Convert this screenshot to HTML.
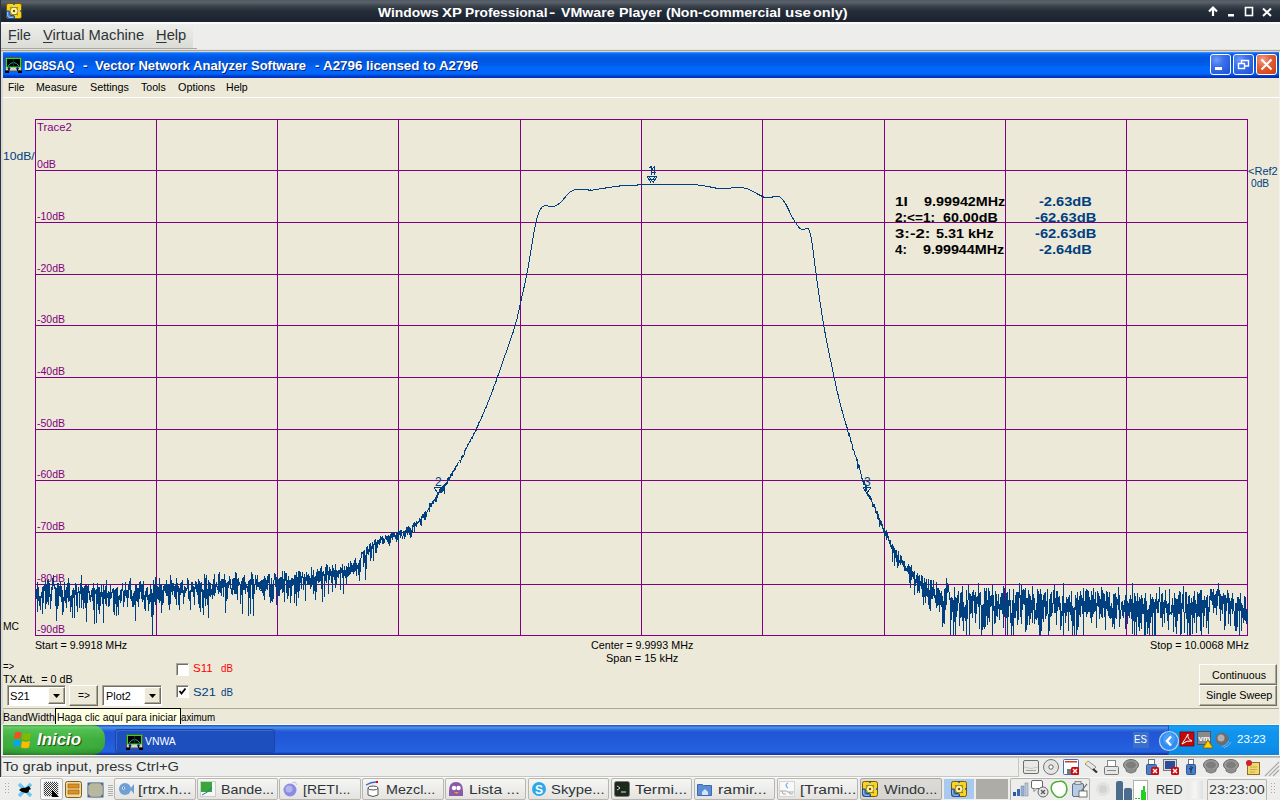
<!DOCTYPE html>
<html><head><meta charset="utf-8">
<style>
*{margin:0;padding:0;box-sizing:border-box}
html,body{width:1280px;height:800px;overflow:hidden;background:#ECE9D8;font-family:"Liberation Sans",sans-serif;position:relative}
.a{position:absolute}
.t{position:absolute;white-space:nowrap;line-height:1;transform-origin:0 0}
.t u{text-decoration:underline;text-underline-offset:2px}
.btn{position:absolute;background:#ECE9D8;border-top:1px solid #fff;border-left:1px solid #fff;border-right:1px solid #716f64;border-bottom:1px solid #716f64;box-shadow:inset -1px -1px 0 #aca899}
.sunk{position:absolute;background:#fff;border-top:1px solid #aca899;border-left:1px solid #aca899;border-right:1px solid #fff;border-bottom:1px solid #fff;box-shadow:inset 1px 1px 0 #716f64}
.pb{position:absolute;top:778px;height:22px;border:1px solid #b8b6b0;border-radius:2px;background:linear-gradient(#f6f6f5,#e4e3e0)}
.ic{position:absolute}
</style></head><body>
<!-- ========== VMware title bar ========== -->
<div class="a" style="left:0;top:0;width:1280px;height:22px;background:linear-gradient(#50575f 0,#5c636c 2px,#3a424c 6px,#252d39 11px,#1b2330 22px)"></div>
<svg class="ic" style="left:6px;top:3px" width="16" height="16" viewBox="0 0 16 16">
 <rect x="0.5" y="0.5" width="15" height="15" rx="1.8" fill="#f8d41e" stroke="#7a5c00" stroke-width="1"/>
 <path d="M0.5 8H2.8Q3.8 8 3.8 9V11.5Q3.8 12.5 4.8 12.5H7.5Q8.5 12.5 8.5 13.5V15.5H4Q0.5 15.5 0.5 12Z" fill="#4a86d0" stroke="#1c4a98" stroke-width="1"/>
 <path d="M1.5 9v3q0 2.5 2.5 2.5h3" fill="none" stroke="#a8c8f0" stroke-width=".8"/>
 <path d="M4 4.5l3 2M12 4.5l-3 2M4 12l3-2M12 12l-3-2" stroke="#7a5c00" stroke-width="1"/>
 <path d="M5.5 4.5h5l1.5 3.5-1.5 3.5h-5L4 8z" fill="#fff39a" stroke="#8a6a00" stroke-width=".8"/>
 <circle cx="8" cy="8" r="1.2" fill="#6a5000"/>
 <rect x="7.3" y="0" width="1.4" height="2" fill="#1c4a98"/><rect x="14" y="7.3" width="2" height="1.4" fill="#1c4a98"/>
 <rect x="7" y="3.2" width="2" height="1" fill="#a8d0f8"/><rect x="11.8" y="7" width="1" height="2" fill="#a8d0f8"/>
</svg>
<svg class="ic" style="left:1200px;top:4px" width="80" height="14" viewBox="0 0 80 14">
 <path d="M13 12V4M9 7.5l4-4 4 4" fill="none" stroke="#fff" stroke-width="2.2"/>
 <rect x="28" y="10" width="6" height="2.5" fill="#fff"/>
 <rect x="45.5" y="3.5" width="7" height="8" fill="none" stroke="#fff" stroke-width="1.6"/>
 <path d="M63 4.5l8 7.5M71 4.5l-8 7.5" stroke="#fff" stroke-width="2"/>
</svg>

<!-- ========== VMware menu bar ========== -->
<div class="a" style="left:0;top:22px;width:1280px;height:27px;background:#EDEDEB"></div>
<div class="a" style="left:0;top:22px;width:1280px;height:2px;background:#fafaf8"></div><div class="a" style="left:1px;top:24px;width:192px;height:24px;background:linear-gradient(#ededeb,#dcdcd6)"></div><div class="a" style="left:0;top:48px;width:197px;height:1px;background:#a9a99f"></div>
<div class="a" style="left:0;top:49px;width:1280px;height:1px;background:#e4e4e0"></div>
<div class="a" style="left:0;top:50px;width:1280px;height:1px;background:#a8a69c"></div>
<div class="a" style="left:0;top:51px;width:1280px;height:1px;background:#d8d4c8"></div>

<!-- ========== XP window ========== -->
<div class="a" style="left:1px;top:52px;width:2px;height:673px;background:#d9d8d4"></div>
<div class="a" style="left:3px;top:52px;width:1276px;height:26px;background:linear-gradient(#3a8cff 0,#3a8cff 1px,#0a70ff 1px,#0a70ff 2px,#0062f0 2px,#0062f0 4px,#0056e0 5px,#0056e0 9px,#005ce8 11px,#005ce8 13px,#0066fc 15px,#0066fc 22px,#0050e0 23px,#0040d0 24px,#0030c0 25px,#0030c0 26px)"></div>
<div class="a" style="left:3px;top:52px;width:1276px;height:26px;background:linear-gradient(90deg,rgba(0,0,0,0) 0,rgba(0,0,0,0) 95%,rgba(0,20,90,.15) 100%)"></div>
<svg class="ic" style="left:5px;top:57px" width="17" height="16" viewBox="0 0 17 16">
 <rect x="0.5" y="0.5" width="16" height="13.5" rx="1" fill="#d8d2c6" stroke="#5a5448" stroke-width="1"/>
 <rect x="1.5" y="1.5" width="14" height="8.5" fill="#000" stroke="#22dd22" stroke-width="1"/>
 <path d="M3 9Q8.5 2 14 9" fill="none" stroke="#1aa0a8" stroke-width="1"/>
 <rect x="8" y="2" width="1" height="7" fill="#0a3a10"/>
 <circle cx="4" cy="11.5" r="1.3" fill="#001880"/><circle cx="12.5" cy="11.5" r="1.3" fill="#001880"/>
 <rect x="0" y="13.5" width="4" height="2.5" fill="#000"/><rect x="13" y="13.5" width="4" height="2.5" fill="#000"/>
 <rect x="3.5" y="12" width="1" height="2" fill="#000"/><rect x="12" y="12" width="1" height="2" fill="#000"/>
</svg>
<!-- XP title buttons -->
<div class="a" style="left:1210px;top:54px;width:21px;height:21px;border:1px solid #fff;border-radius:3px;background:radial-gradient(circle at 30% 25%,#6e9df8 0,#3c70ee 35%,#2a5fe0 70%,#1d4fd0 100%)"></div>
<div class="a" style="left:1215px;top:67px;width:7px;height:3px;background:#fff"></div>
<div class="a" style="left:1233px;top:54px;width:21px;height:21px;border:1px solid #fff;border-radius:3px;background:radial-gradient(circle at 30% 25%,#6e9df8 0,#3c70ee 35%,#2a5fe0 70%,#1d4fd0 100%)"></div>
<svg class="ic" style="left:1233px;top:54px" width="21" height="21" viewBox="0 0 21 21">
 <rect x="5.5" y="9.5" width="6" height="5" fill="none" stroke="#fff" stroke-width="1.4"/>
 <path d="M8.5 9V6.5h7v5.5h-3.5" fill="none" stroke="#fff" stroke-width="1.4"/>
</svg>
<div class="a" style="left:1256px;top:54px;width:21px;height:21px;border:1px solid #fff;border-radius:3px;background:radial-gradient(circle at 30% 25%,#f0a088 0,#e2603a 40%,#d84a1c 75%,#c43a10 100%)"></div>
<svg class="ic" style="left:1256px;top:54px" width="21" height="21" viewBox="0 0 21 21">
 <path d="M5.5 5.5l10 10M15.5 5.5l-10 10" stroke="#fff" stroke-width="2"/>
</svg>
<div class="a" style="left:1279px;top:52px;width:1px;height:703px;background:#f2f2f0"></div>

<!-- app menu -->
<div class="a" style="left:3px;top:97px;width:1276px;height:1px;background:#fff"></div>

<!-- ========== chart ========== -->
<svg class="a" style="left:0;top:0" width="1280" height="800" shape-rendering="crispEdges">
<g fill="#800080"><rect x="35" y="119" width="1" height="517"/><rect x="156" y="119" width="1" height="517"/><rect x="277" y="119" width="1" height="517"/><rect x="398" y="119" width="1" height="517"/><rect x="520" y="119" width="1" height="517"/><rect x="641" y="119" width="1" height="517"/><rect x="762" y="119" width="1" height="517"/><rect x="884" y="119" width="1" height="517"/><rect x="1005" y="119" width="1" height="517"/><rect x="1126" y="119" width="1" height="517"/><rect x="1247" y="119" width="1" height="517"/><rect x="35" y="119" width="1213" height="1"/><rect x="35" y="170" width="1213" height="1"/><rect x="35" y="222" width="1213" height="1"/><rect x="35" y="274" width="1213" height="1"/><rect x="35" y="325" width="1213" height="1"/><rect x="35" y="377" width="1213" height="1"/><rect x="35" y="429" width="1213" height="1"/><rect x="35" y="480" width="1213" height="1"/><rect x="35" y="532" width="1213" height="1"/><rect x="35" y="584" width="1213" height="1"/><rect x="35" y="635" width="1213" height="1"/></g>
<path d="M35.5 595.5 L35.8 592.4 L36.2 589.0 L36.5 599.3 L36.8 596.4 L37.2 582.2 L37.5 594.7 L37.8 612.1 L38.2 592.5 L38.5 586.6 L38.8 591.0 L39.2 600.0 L39.5 597.9 L39.8 600.8 L40.2 610.2 L40.5 596.6 L40.8 598.0 L41.2 593.8 L41.5 591.7 L41.8 598.4 L42.2 586.7 L42.5 599.1 L42.8 613.8 L43.2 593.8 L43.5 586.1 L43.8 593.7 L44.2 584.6 L44.5 583.7 L44.8 590.5 L45.2 578.6 L45.5 598.9 L45.8 609.2 L46.2 599.9 L46.5 592.9 L46.8 585.0 L47.2 602.4 L47.5 593.6 L47.8 580.7 L48.2 579.5 L48.5 604.9 L48.8 599.5 L49.2 582.9 L49.5 594.7 L49.8 596.8 L50.2 593.8 L50.5 599.0 L50.8 608.8 L51.2 593.6 L51.5 588.4 L51.8 587.0 L52.2 589.6 L52.5 581.3 L52.8 577.9 L53.2 586.2 L53.5 574.9 L53.8 582.5 L54.2 586.4 L54.5 588.7 L54.8 584.5 L55.2 590.0 L55.5 589.5 L55.8 589.3 L56.2 620.8 L56.5 590.1 L56.8 588.1 L57.2 590.2 L57.5 609.2 L57.8 583.5 L58.2 605.8 L58.5 602.2 L58.8 583.2 L59.2 588.3 L59.5 590.5 L59.8 595.2 L60.2 597.1 L60.5 585.1 L60.8 582.4 L61.2 598.2 L61.5 591.0 L61.8 585.6 L62.2 614.9 L62.5 613.0 L62.8 589.8 L63.2 603.3 L63.5 609.5 L63.8 612.0 L64.2 591.4 L64.5 581.8 L64.8 597.7 L65.2 593.7 L65.5 602.6 L65.8 592.4 L66.2 587.3 L66.5 607.9 L66.8 594.7 L67.2 582.7 L67.5 588.0 L67.8 593.7 L68.2 602.1 L68.5 589.4 L68.8 577.8 L69.2 587.7 L69.5 585.8 L69.8 595.7 L70.2 605.5 L70.5 612.4 L70.8 596.3 L71.2 605.0 L71.5 599.9 L71.8 595.5 L72.2 617.7 L72.5 589.8 L72.8 594.8 L73.2 597.9 L73.5 587.9 L73.8 593.2 L74.2 593.8 L74.5 617.8 L74.8 590.2 L75.2 593.3 L75.5 594.7 L75.8 583.5 L76.2 591.3 L76.5 584.0 L76.8 605.6 L77.2 604.7 L77.5 611.8 L77.8 596.7 L78.2 587.5 L78.5 592.2 L78.8 591.6 L79.2 594.5 L79.5 608.3 L79.8 591.6 L80.2 591.7 L80.5 585.7 L80.8 593.9 L81.2 574.6 L81.5 608.3 L81.8 604.5 L82.2 593.8 L82.5 586.7 L82.8 594.1 L83.2 604.0 L83.5 588.2 L83.8 608.7 L84.2 592.3 L84.5 603.1 L84.8 586.2 L85.2 607.5 L85.5 585.1 L85.8 592.8 L86.2 621.5 L86.5 585.3 L86.8 594.8 L87.2 602.8 L87.5 590.2 L87.8 585.6 L88.2 593.2 L88.5 587.6 L88.8 584.7 L89.2 596.8 L89.5 591.6 L89.8 596.7 L90.2 601.8 L90.5 597.5 L90.8 595.4 L91.2 597.2 L91.5 590.4 L91.8 590.8 L92.2 589.1 L92.5 589.0 L92.8 593.7 L93.2 607.8 L93.5 582.9 L93.8 592.5 L94.2 623.6 L94.5 588.0 L94.8 596.6 L95.2 592.1 L95.5 594.4 L95.8 590.3 L96.2 595.8 L96.5 588.6 L96.8 622.5 L97.2 587.7 L97.5 591.5 L97.8 583.2 L98.2 590.2 L98.5 599.4 L98.8 609.9 L99.2 587.5 L99.5 599.3 L99.8 613.5 L100.2 592.2 L100.5 600.5 L100.8 605.8 L101.2 584.2 L101.5 589.2 L101.8 591.9 L102.2 600.4 L102.5 592.4 L102.8 603.9 L103.2 585.5 L103.5 622.9 L103.8 606.9 L104.2 591.9 L104.5 590.2 L104.8 598.2 L105.2 585.7 L105.5 603.8 L105.8 601.1 L106.2 606.2 L106.5 580.0 L106.8 594.8 L107.2 598.0 L107.5 593.6 L107.8 594.4 L108.2 600.4 L108.5 591.0 L108.8 607.2 L109.2 605.7 L109.5 593.5 L109.8 593.3 L110.2 590.4 L110.5 598.8 L110.8 585.2 L111.2 597.6 L111.5 596.2 L111.8 593.0 L112.2 591.9 L112.5 589.2 L112.8 592.6 L113.2 592.7 L113.5 612.4 L113.8 587.6 L114.2 615.2 L114.5 591.6 L114.8 591.5 L115.2 588.6 L115.5 601.4 L115.8 590.9 L116.2 615.7 L116.5 597.5 L116.8 589.6 L117.2 587.1 L117.5 590.4 L117.8 596.8 L118.2 614.5 L118.5 606.2 L118.8 595.6 L119.2 599.6 L119.5 597.4 L119.8 595.5 L120.2 595.1 L120.5 602.9 L120.8 589.8 L121.2 600.7 L121.5 590.6 L121.8 594.7 L122.2 584.8 L122.5 583.2 L122.8 584.6 L123.2 596.9 L123.5 607.0 L123.8 600.3 L124.2 592.1 L124.5 590.1 L124.8 602.3 L125.2 591.5 L125.5 582.3 L125.8 586.7 L126.2 593.1 L126.5 598.0 L126.8 591.9 L127.2 590.4 L127.5 599.4 L127.8 607.1 L128.2 590.5 L128.5 585.4 L128.8 593.5 L129.2 588.0 L129.5 590.1 L129.8 580.7 L130.2 587.7 L130.5 599.2 L130.8 578.2 L131.2 600.7 L131.5 594.6 L131.8 596.3 L132.2 596.4 L132.5 596.7 L132.8 606.0 L133.2 607.1 L133.5 598.7 L133.8 595.2 L134.2 591.3 L134.5 604.8 L134.8 595.8 L135.2 589.8 L135.5 585.2 L135.8 620.6 L136.2 585.4 L136.5 590.9 L136.8 598.4 L137.2 595.0 L137.5 602.1 L137.8 588.0 L138.2 595.2 L138.5 588.2 L138.8 607.2 L139.2 582.3 L139.5 598.7 L139.8 588.8 L140.2 584.4 L140.5 580.7 L140.8 584.1 L141.2 598.5 L141.5 585.3 L141.8 585.1 L142.2 583.8 L142.5 600.6 L142.8 601.1 L143.2 581.4 L143.5 593.5 L143.8 590.7 L144.2 608.9 L144.5 594.7 L144.8 597.7 L145.2 596.4 L145.5 610.7 L145.8 590.6 L146.2 594.0 L146.5 588.4 L146.8 596.2 L147.2 597.0 L147.5 592.8 L147.8 587.2 L148.2 610.5 L148.5 594.9 L148.8 600.6 L149.2 597.9 L149.5 593.9 L149.8 603.6 L150.2 600.0 L150.5 584.6 L150.8 586.5 L151.2 591.1 L151.5 591.5 L151.8 595.5 L152.2 635.0 L152.5 613.2 L152.8 592.9 L153.2 614.5 L153.5 603.9 L153.8 580.5 L154.2 602.2 L154.5 600.9 L154.8 594.5 L155.2 576.9 L155.5 587.9 L155.8 604.5 L156.2 584.4 L156.5 603.2 L156.8 582.3 L157.2 596.6 L157.5 599.4 L157.8 585.6 L158.2 588.9 L158.5 597.3 L158.8 599.5 L159.2 578.0 L159.5 603.2 L159.8 597.1 L160.2 584.3 L160.5 598.1 L160.8 588.0 L161.2 613.0 L161.5 585.4 L161.8 600.0 L162.2 592.9 L162.5 590.5 L162.8 604.6 L163.2 601.6 L163.5 597.4 L163.8 586.6 L164.2 586.3 L164.5 589.8 L164.8 590.1 L165.2 583.8 L165.5 590.6 L165.8 593.0 L166.2 579.7 L166.5 590.4 L166.8 595.4 L167.2 595.4 L167.5 596.0 L167.8 583.9 L168.2 592.0 L168.5 584.0 L168.8 599.6 L169.2 610.0 L169.5 600.9 L169.8 585.1 L170.2 603.7 L170.5 595.0 L170.8 575.1 L171.2 585.1 L171.5 591.8 L171.8 579.9 L172.2 586.4 L172.5 592.5 L172.8 594.5 L173.2 588.0 L173.5 584.3 L173.8 583.2 L174.2 590.9 L174.5 596.8 L174.8 588.7 L175.2 584.4 L175.5 598.2 L175.8 591.1 L176.2 604.9 L176.5 578.1 L176.8 592.6 L177.2 591.1 L177.5 583.2 L177.8 590.6 L178.2 585.8 L178.5 605.2 L178.8 594.3 L179.2 609.6 L179.5 588.3 L179.8 593.6 L180.2 583.8 L180.5 583.1 L180.8 594.9 L181.2 591.8 L181.5 585.4 L181.8 581.7 L182.2 589.1 L182.5 584.9 L182.8 580.0 L183.2 604.2 L183.5 592.1 L183.8 589.8 L184.2 590.9 L184.5 586.2 L184.8 596.7 L185.2 587.4 L185.5 588.9 L185.8 592.5 L186.2 589.1 L186.5 589.5 L186.8 589.5 L187.2 587.6 L187.5 585.1 L187.8 577.7 L188.2 582.1 L188.5 586.8 L188.8 598.8 L189.2 591.5 L189.5 594.5 L189.8 591.6 L190.2 609.8 L190.5 594.9 L190.8 597.7 L191.2 584.3 L191.5 581.8 L191.8 592.2 L192.2 582.5 L192.5 584.5 L192.8 592.0 L193.2 585.7 L193.5 597.1 L193.8 594.3 L194.2 594.4 L194.5 604.6 L194.8 586.7 L195.2 587.7 L195.5 581.4 L195.8 587.0 L196.2 589.9 L196.5 591.5 L196.8 581.8 L197.2 590.2 L197.5 584.2 L197.8 592.1 L198.2 598.3 L198.5 579.2 L198.8 604.3 L199.2 591.8 L199.5 581.2 L199.8 608.2 L200.2 583.4 L200.5 611.8 L200.8 596.9 L201.2 581.6 L201.5 584.3 L201.8 591.6 L202.2 589.1 L202.5 602.5 L202.8 599.1 L203.2 614.8 L203.5 598.8 L203.8 589.9 L204.2 597.7 L204.5 594.1 L204.8 574.1 L205.2 581.5 L205.5 606.3 L205.8 588.9 L206.2 589.5 L206.5 574.8 L206.8 598.0 L207.2 599.5 L207.5 591.0 L207.8 589.0 L208.2 618.4 L208.5 582.7 L208.8 580.2 L209.2 583.0 L209.5 591.0 L209.8 594.5 L210.2 596.7 L210.5 591.2 L210.8 582.8 L211.2 593.6 L211.5 591.8 L211.8 595.4 L212.2 586.5 L212.5 598.7 L212.8 585.2 L213.2 592.3 L213.5 594.5 L213.8 583.3 L214.2 574.2 L214.5 588.9 L214.8 595.7 L215.2 590.6 L215.5 588.3 L215.8 589.1 L216.2 581.8 L216.5 584.7 L216.8 584.9 L217.2 588.2 L217.5 589.1 L217.8 585.8 L218.2 593.6 L218.5 585.8 L218.8 573.8 L219.2 591.6 L219.5 572.3 L219.8 573.5 L220.2 593.0 L220.5 581.1 L220.8 587.3 L221.2 583.4 L221.5 578.9 L221.8 595.5 L222.2 581.4 L222.5 587.4 L222.8 579.2 L223.2 579.1 L223.5 596.5 L223.8 591.0 L224.2 583.6 L224.5 579.8 L224.8 574.2 L225.2 584.4 L225.5 585.9 L225.8 612.6 L226.2 589.6 L226.5 582.7 L226.8 595.5 L227.2 598.9 L227.5 594.7 L227.8 582.4 L228.2 588.2 L228.5 583.3 L228.8 585.6 L229.2 576.4 L229.5 585.4 L229.8 578.5 L230.2 579.1 L230.5 589.2 L230.8 584.4 L231.2 591.9 L231.5 590.0 L231.8 593.3 L232.2 595.1 L232.5 590.9 L232.8 579.3 L233.2 579.0 L233.5 586.3 L233.8 589.9 L234.2 578.1 L234.5 588.6 L234.8 593.7 L235.2 574.8 L235.5 593.5 L235.8 571.6 L236.2 585.1 L236.5 572.8 L236.8 586.5 L237.2 599.8 L237.5 580.0 L237.8 579.6 L238.2 579.2 L238.5 578.3 L238.8 584.8 L239.2 584.1 L239.5 584.0 L239.8 582.5 L240.2 587.7 L240.5 590.1 L240.8 603.9 L241.2 584.6 L241.5 595.2 L241.8 583.5 L242.2 578.2 L242.5 614.0 L242.8 581.3 L243.2 584.9 L243.5 590.3 L243.8 577.5 L244.2 590.3 L244.5 575.1 L244.8 580.4 L245.2 583.7 L245.5 593.7 L245.8 591.4 L246.2 585.5 L246.5 586.9 L246.8 584.1 L247.2 587.1 L247.5 591.1 L247.8 591.4 L248.2 581.1 L248.5 616.2 L248.8 580.9 L249.2 589.8 L249.5 588.4 L249.8 580.4 L250.2 613.7 L250.5 586.3 L250.8 589.0 L251.2 571.8 L251.5 585.0 L251.8 580.6 L252.2 579.8 L252.5 573.6 L252.8 579.1 L253.2 615.9 L253.5 579.0 L253.8 599.2 L254.2 585.7 L254.5 585.9 L254.8 593.7 L255.2 578.1 L255.5 585.1 L255.8 574.6 L256.2 589.7 L256.5 578.6 L256.8 581.8 L257.2 587.2 L257.5 574.6 L257.8 579.7 L258.2 584.1 L258.5 587.4 L258.8 582.7 L259.2 582.8 L259.5 583.0 L259.8 588.0 L260.2 591.4 L260.5 589.5 L260.8 581.2 L261.2 580.5 L261.5 581.8 L261.8 590.5 L262.2 588.8 L262.5 579.6 L262.8 592.8 L263.2 578.6 L263.5 596.3 L263.8 583.1 L264.2 600.3 L264.5 575.6 L264.8 579.2 L265.2 577.8 L265.5 590.2 L265.8 590.3 L266.2 585.8 L266.5 589.1 L266.8 583.5 L267.2 577.6 L267.5 589.8 L267.8 576.6 L268.2 575.9 L268.5 579.4 L268.8 580.9 L269.2 584.0 L269.5 596.7 L269.8 574.1 L270.2 594.8 L270.5 594.7 L270.8 603.4 L271.2 598.3 L271.5 579.3 L271.8 577.6 L272.2 591.1 L272.5 586.0 L272.8 601.6 L273.2 597.5 L273.5 583.0 L273.8 588.4 L274.2 572.7 L274.5 576.0 L274.8 576.1 L275.2 580.5 L275.5 586.6 L275.8 574.2 L276.2 579.1 L276.5 604.5 L276.8 578.2 L277.2 578.6 L277.5 589.9 L277.8 586.7 L278.2 578.9 L278.5 583.2 L278.8 595.5 L279.2 578.0 L279.5 595.9 L279.8 588.0 L280.2 581.7 L280.5 576.7 L280.8 589.9 L281.2 580.2 L281.5 576.8 L281.8 589.4 L282.2 579.1 L282.5 571.1 L282.8 593.0 L283.2 578.7 L283.5 581.1 L283.8 578.6 L284.2 601.8 L284.5 593.1 L284.8 571.4 L285.2 574.8 L285.5 581.0 L285.8 579.9 L286.2 579.3 L286.5 593.2 L286.8 573.5 L287.2 599.0 L287.5 583.8 L287.8 580.9 L288.2 580.9 L288.5 595.6 L288.8 576.1 L289.2 585.7 L289.5 587.5 L289.8 581.5 L290.2 582.1 L290.5 603.0 L290.8 582.2 L291.2 577.8 L291.5 595.6 L291.8 578.5 L292.2 585.2 L292.5 586.4 L292.8 578.2 L293.2 584.1 L293.5 578.8 L293.8 584.0 L294.2 574.8 L294.5 589.0 L294.8 602.6 L295.2 587.2 L295.5 585.8 L295.8 578.2 L296.2 572.3 L296.5 583.9 L296.8 606.0 L297.2 581.2 L297.5 576.7 L297.8 584.6 L298.2 598.3 L298.5 575.2 L298.8 571.5 L299.2 571.4 L299.5 591.4 L299.8 583.0 L300.2 580.4 L300.5 572.4 L300.8 576.0 L301.2 588.8 L301.5 585.8 L301.8 579.8 L302.2 572.4 L302.5 578.3 L302.8 572.1 L303.2 583.2 L303.5 576.9 L303.8 590.2 L304.2 579.9 L304.5 573.9 L304.8 580.4 L305.2 584.2 L305.5 601.4 L305.8 576.6 L306.2 581.3 L306.5 578.4 L306.8 572.2 L307.2 584.6 L307.5 575.1 L307.8 584.4 L308.2 574.1 L308.5 580.4 L308.8 583.6 L309.2 582.7 L309.5 584.4 L309.8 576.5 L310.2 588.5 L310.5 588.6 L310.8 586.5 L311.2 571.1 L311.5 566.6 L311.8 586.5 L312.2 583.6 L312.5 575.2 L312.8 582.3 L313.2 580.0 L313.5 570.5 L313.8 593.9 L314.2 588.9 L314.5 580.4 L314.8 577.5 L315.2 577.2 L315.5 588.4 L315.8 600.3 L316.2 585.2 L316.5 571.9 L316.8 578.5 L317.2 581.1 L317.5 569.6 L317.8 570.4 L318.2 572.1 L318.5 578.5 L318.8 582.5 L319.2 573.3 L319.5 581.7 L319.8 571.2 L320.2 576.9 L320.5 581.1 L320.8 568.2 L321.2 575.0 L321.5 565.7 L321.8 574.1 L322.2 602.1 L322.5 583.1 L322.8 571.7 L323.2 575.8 L323.5 570.6 L323.8 572.2 L324.2 575.1 L324.5 575.0 L324.8 597.3 L325.2 567.4 L325.5 571.4 L325.8 573.8 L326.2 577.0 L326.5 583.1 L326.8 563.9 L327.2 566.6 L327.5 572.3 L327.8 572.2 L328.2 578.3 L328.5 593.5 L328.8 575.1 L329.2 566.9 L329.5 580.4 L329.8 570.7 L330.2 574.6 L330.5 568.6 L330.8 571.3 L331.2 580.4 L331.5 570.6 L331.8 572.9 L332.2 591.9 L332.5 565.1 L332.8 568.5 L333.2 571.1 L333.5 577.3 L333.8 567.8 L334.2 576.0 L334.5 570.3 L334.8 570.3 L335.2 588.1 L335.5 563.8 L335.8 584.3 L336.2 585.2 L336.5 570.2 L336.8 574.6 L337.2 575.4 L337.5 576.8 L337.8 571.5 L338.2 577.2 L338.5 576.7 L338.8 570.1 L339.2 573.2 L339.5 573.0 L339.8 573.0 L340.2 567.2 L340.5 590.3 L340.8 571.7 L341.2 567.7 L341.5 571.3 L341.8 572.7 L342.2 563.8 L342.5 578.1 L342.8 575.9 L343.2 572.5 L343.5 594.3 L343.8 574.5 L344.2 565.7 L344.5 568.9 L344.8 576.3 L345.2 570.1 L345.5 570.9 L345.8 570.6 L346.2 584.1 L346.5 568.2 L346.8 565.6 L347.2 576.6 L347.5 569.3 L347.8 567.2 L348.2 575.5 L348.5 562.9 L348.8 575.4 L349.2 569.0 L349.5 573.0 L349.8 574.7 L350.2 561.3 L350.5 573.5 L350.8 571.2 L351.2 572.2 L351.5 562.9 L351.8 569.7 L352.2 564.7 L352.5 566.9 L352.8 569.0 L353.2 573.9 L353.5 565.9 L353.8 562.8 L354.2 571.8 L354.5 560.5 L354.8 560.6 L355.2 561.5 L355.5 557.8 L355.8 570.5 L356.2 568.6 L356.5 576.2 L356.8 563.5 L357.2 566.3 L357.5 568.4 L357.8 568.1 L358.2 565.6 L358.5 563.0 L358.8 569.2 L359.2 580.5 L359.5 559.7 L359.8 567.3 L360.2 558.0 L360.5 572.0 L360.8 562.7 L361.2 553.8 L361.5 557.8 L361.8 551.8 L362.2 553.5 L362.5 553.2 L362.8 553.3 L363.2 551.5 L363.5 559.3 L363.8 566.9 L364.2 559.5 L364.5 556.7 L364.8 549.8 L365.2 559.3 L365.5 555.3 L365.8 579.6 L366.2 560.0 L366.5 561.1 L366.8 548.7 L367.2 545.9 L367.5 553.9 L367.8 550.9 L368.2 553.5 L368.5 549.1 L368.8 555.0 L369.2 548.6 L369.5 544.2 L369.8 549.4 L370.2 543.5 L370.5 554.4 L370.8 561.3 L371.2 555.8 L371.5 545.7 L371.8 553.2 L372.2 544.5 L372.5 543.4 L372.8 541.9 L373.2 546.7 L373.5 560.6 L373.8 545.3 L374.2 544.9 L374.5 542.3 L374.8 541.0 L375.2 540.3 L375.5 546.1 L375.8 553.2 L376.2 552.2 L376.5 544.7 L376.8 543.4 L377.2 539.9 L377.5 545.3 L377.8 548.3 L378.2 540.2 L378.5 542.9 L378.8 544.3 L379.2 539.5 L379.5 545.3 L379.8 539.1 L380.2 542.7 L380.5 537.3 L380.8 536.4 L381.2 539.5 L381.5 537.0 L381.8 540.4 L382.2 536.4 L382.5 539.6 L382.8 544.4 L383.2 540.7 L383.5 538.1 L383.8 543.8 L384.2 539.4 L384.5 543.4 L384.8 539.6 L385.2 537.9 L385.5 534.6 L385.8 537.7 L386.2 538.7 L386.5 540.0 L386.8 536.1 L387.2 537.3 L387.5 536.3 L387.8 540.1 L388.2 539.3 L388.5 543.9 L388.8 535.5 L389.2 537.4 L389.5 537.7 L389.8 546.1 L390.2 536.0 L390.5 543.2 L390.8 534.5 L391.2 538.3 L391.5 534.4 L391.8 532.1 L392.2 533.9 L392.5 534.9 L392.8 539.6 L393.2 534.5 L393.5 533.3 L393.8 532.7 L394.2 535.1 L394.5 533.2 L394.8 534.4 L395.2 539.4 L395.5 536.8 L395.8 535.2 L396.2 541.7 L396.5 532.6 L396.8 532.6 L397.2 536.7 L397.5 533.3 L397.8 537.6 L398.2 542.5 L398.5 537.6 L398.8 529.3 L399.2 535.4 L399.5 532.0 L399.8 531.4 L400.2 538.3 L400.5 530.2 L400.8 534.8 L401.2 531.8 L401.5 530.0 L401.8 533.7 L402.2 537.6 L402.5 536.7 L402.8 539.4 L403.2 532.7 L403.5 532.1 L403.8 533.2 L404.2 531.4 L404.5 536.1 L404.8 539.0 L405.2 535.9 L405.5 532.0 L405.8 530.7 L406.2 531.5 L406.5 526.8 L406.8 528.7 L407.2 533.1 L407.5 533.6 L407.8 528.4 L408.2 526.2 L408.5 531.2 L408.8 527.7 L409.2 534.9 L409.5 527.2 L409.8 535.3 L410.2 528.4 L410.5 537.8 L410.8 527.9 L411.2 534.5 L411.5 529.7 L411.8 536.6 L412.2 526.8 L412.5 531.7 L412.8 525.5 L413.2 526.5 L413.5 523.1 L413.8 526.4 L414.2 523.8 L414.5 532.0 L414.8 522.4 L415.2 525.5 L415.5 523.2 L415.8 523.2 L416.2 527.0 L416.5 526.6 L416.8 521.4 L417.2 522.4 L417.5 523.5 L417.8 523.4 L418.2 521.0 L418.5 523.2 L418.8 521.1 L419.2 522.3 L419.5 519.1 L419.8 519.6 L420.2 519.9 L420.5 521.9 L420.8 524.7 L421.2 518.4 L421.5 526.0 L421.8 516.4 L422.2 514.9 L422.5 518.2 L422.8 515.6 L423.2 516.1 L423.5 514.4 L423.8 518.0 L424.2 513.4 L424.5 513.0 L424.8 520.2 L425.2 519.4 L425.5 511.0 L425.8 513.3 L426.2 511.9 L426.5 516.5 L426.8 512.1 L427.2 511.4 L427.5 510.8 L427.8 511.9 L428.2 508.8 L428.5 508.2 L428.8 508.2 L429.2 508.8 L429.5 511.7 L429.8 505.0 L430.2 505.8 L430.5 503.1 L430.8 506.3 L431.2 504.9 L431.5 506.8 L431.8 504.1 L432.2 502.5 L432.5 503.9 L432.8 501.3 L433.2 503.2 L433.5 504.0 L433.8 500.5 L434.2 499.3 L434.5 499.7 L434.8 501.0 L435.2 498.6 L435.5 501.6 L435.8 498.8 L436.2 496.1 L436.5 495.7 L436.8 501.7 L437.2 494.7 L437.5 494.7 L437.8 492.6 L438.2 494.9 L438.5 493.3 L438.8 494.5 L439.2 492.2 L439.5 490.2 L439.8 490.6 L440.2 492.2 L440.5 493.0 L440.8 488.8 L441.2 488.3 L441.5 489.6 L441.8 492.7 L442.2 491.2 L442.5 487.5 L442.8 486.8 L443.2 488.3 L443.5 485.3 L443.8 487.9 L444.2 494.2 L444.5 488.4 L444.8 485.2 L445.2 485.4 L445.5 485.3 L445.8 484.0 L446.2 482.0 L446.5 484.8 L446.8 485.0 L447.2 482.6 L447.5 480.2 L447.8 478.9 L448.2 480.0 L448.5 478.1 L448.8 477.8 L449.2 480.6 L449.5 477.5 L449.8 479.4 L450.2 476.0 L450.5 475.2 L450.8 476.0 L451.2 475.0 L451.5 473.2 L451.8 474.2 L452.2 472.7 L452.5 475.5 L452.8 471.3 L453.2 470.1 L453.5 470.8 L453.8 472.4 L454.2 469.9 L454.5 469.2 L454.8 469.0 L455.2 467.6 L455.5 468.3 L455.8 466.5 L456.2 465.3 L456.5 465.5 L456.8 466.8 L457.2 465.2 L457.5 463.9 L457.8 463.5 L458.2 462.9 L458.5 462.4 L458.8 462.7 L459.2 461.6 L459.5 461.5 L459.8 460.7 L460.2 461.8 L460.5 460.6 L460.8 461.0 L461.2 459.3 L461.5 457.2 L461.8 457.7 L462.2 456.0 L462.5 456.6 L462.8 455.0 L463.2 456.5 L463.5 454.7 L463.8 456.1 L464.2 453.8 L464.5 451.9 L464.8 450.8 L465.2 450.5 L465.5 449.7 L465.8 448.7 L466.2 448.0 L466.5 448.6 L466.8 448.5 L467.2 446.4 L467.5 446.1 L467.8 445.1 L468.2 443.7 L468.5 444.2 L468.8 443.8 L469.2 442.4 L469.5 442.4 L469.8 441.3 L470.2 441.2 L470.5 440.5 L470.8 440.4 L471.2 438.4 L471.5 438.2 L471.8 437.6 L472.2 438.4 L472.5 437.8 L472.8 436.4 L473.2 435.4 L473.5 434.5 L473.8 433.8 L474.2 433.1 L474.5 433.2 L474.8 432.7 L475.2 430.8 L475.5 430.7 L475.8 431.2 L476.2 430.7 L476.5 428.9 L476.8 427.9 L477.2 427.2 L477.5 426.9 L477.8 426.0 L478.2 425.1 L478.5 424.9 L478.8 422.8 L479.2 422.4 L479.5 422.2 L479.8 421.4 L480.2 420.0 L480.5 419.7 L480.8 419.9 L481.2 417.6 L481.5 417.1 L481.8 416.7 L482.2 416.7 L482.5 415.3 L482.8 414.7 L483.2 413.3 L483.5 412.3 L483.8 412.0 L484.2 411.8 L484.5 410.2 L484.8 409.9 L485.2 408.9 L485.5 407.8 L485.8 408.4 L486.2 406.8 L486.5 405.6 L486.8 406.0 L487.2 404.3 L487.5 403.7 L487.8 402.7 L488.2 401.9 L488.5 401.2 L488.8 400.4 L489.2 400.0 L489.5 398.5 L489.8 397.7 L490.2 396.8 L490.5 396.1 L490.8 395.2 L491.2 395.0 L491.5 393.6 L491.8 392.6 L492.2 391.2 L492.5 390.6 L492.8 389.6 L493.2 389.2 L493.5 388.0 L493.8 386.7 L494.2 386.0 L494.5 385.2 L494.8 384.3 L495.2 383.4 L495.5 382.4 L495.8 381.6 L496.2 381.6 L496.5 379.9 L496.8 379.1 L497.2 377.7 L497.5 377.1 L497.8 376.1 L498.2 375.1 L498.5 374.4 L498.8 373.3 L499.2 372.0 L499.5 371.8 L499.8 370.2 L500.2 369.1 L500.5 368.4 L500.8 367.8 L501.2 366.4 L501.5 365.5 L501.8 364.6 L502.2 363.3 L502.5 362.6 L502.8 362.0 L503.2 360.6 L503.5 360.0 L503.8 358.8 L504.2 357.8 L504.5 356.8 L504.8 355.9 L505.2 354.9 L505.5 354.2 L505.8 353.2 L506.2 352.5 L506.5 351.4 L506.8 350.3 L507.2 349.0 L507.5 348.3 L507.8 347.3 L508.2 346.3 L508.5 345.3 L508.8 344.5 L509.2 343.4 L509.5 342.5 L509.8 341.7 L510.2 340.7 L510.5 339.6 L510.8 338.9 L511.2 337.6 L511.5 336.8 L511.8 336.0 L512.2 334.8 L512.5 334.3 L512.8 333.0 L513.2 331.9 L513.5 330.9 L513.8 329.9 L514.2 328.9 L514.5 327.9 L514.8 326.9 L515.2 325.4 L515.5 324.3 L515.8 323.2 L516.2 321.6 L516.5 320.7 L516.8 319.4 L517.2 317.8 L517.5 316.4 L517.8 315.0 L518.2 313.2 L518.5 312.1 L518.8 310.6 L519.2 308.9 L519.5 307.6 L519.8 306.2 L520.2 304.5 L520.5 303.2 L520.8 301.8 L521.2 300.1 L521.5 298.7 L521.8 297.4 L522.2 295.5 L522.5 294.2 L522.8 292.9 L523.2 291.2 L523.5 289.6 L523.8 288.4 L524.2 286.6 L524.5 285.2 L524.8 283.9 L525.2 282.1 L525.5 280.6 L525.8 279.3 L526.2 277.2 L526.5 275.7 L526.8 274.2 L527.2 272.1 L527.5 270.4 L527.8 268.8 L528.2 266.6 L528.5 264.7 L528.8 263.0 L529.2 260.7 L529.5 258.9 L529.8 257.0 L530.2 254.6 L530.5 252.8 L530.8 251.0 L531.2 248.6 L531.5 246.7 L531.8 244.9 L532.2 242.4 L532.5 240.7 L532.8 238.9 L533.2 236.5 L533.5 234.7 L533.8 233.0 L534.2 230.8 L534.5 229.2 L534.8 227.6 L535.2 225.6 L535.5 224.2 L535.8 222.9 L536.2 221.2 L536.5 220.0 L536.8 218.9 L537.2 217.6 L537.5 216.5 L537.8 215.6 L538.2 214.4 L538.5 213.5 L538.8 212.8 L539.2 211.8 L539.5 211.1 L539.8 210.5 L540.2 209.7 L540.5 209.2 L540.8 208.7 L541.2 208.1 L541.5 207.7 L541.8 207.4 L542.2 207.0 L542.5 206.7 L542.8 206.5 L543.2 206.3 L543.5 206.1 L543.8 206.1 L544.2 205.9 L544.5 205.8 L544.8 205.8 L545.2 205.7 L545.5 205.7 L545.8 205.7 L546.2 205.7 L546.5 205.7 L546.8 205.7 L547.2 205.8 L547.5 205.8 L547.8 205.8 L548.2 206.0 L548.5 206.0 L548.8 206.1 L549.2 206.2 L549.5 206.3 L549.8 206.4 L550.2 206.5 L550.5 206.6 L550.8 206.7 L551.2 206.7 L551.5 206.8 L551.8 206.8 L552.2 206.8 L552.5 206.8 L552.8 206.8 L553.2 206.7 L553.5 206.6 L553.8 206.5 L554.2 206.4 L554.5 206.2 L554.8 206.1 L555.2 205.9 L555.5 205.7 L555.8 205.6 L556.2 205.4 L556.5 205.2 L556.8 205.0 L557.2 204.8 L557.5 204.6 L557.8 204.5 L558.2 204.2 L558.5 204.0 L558.8 203.9 L559.2 203.6 L559.5 203.4 L559.8 203.1 L560.2 202.8 L560.5 202.5 L560.8 202.3 L561.2 201.9 L561.5 201.6 L561.8 201.2 L562.2 200.8 L562.5 200.4 L562.8 200.1 L563.2 199.6 L563.5 199.2 L563.8 198.9 L564.2 198.4 L564.5 198.0 L564.8 197.6 L565.2 197.1 L565.5 196.8 L565.8 196.4 L566.2 195.9 L566.5 195.5 L566.8 195.2 L567.2 194.7 L567.5 194.4 L567.8 194.1 L568.2 193.7 L568.5 193.4 L568.8 193.2 L569.2 192.8 L569.5 192.6 L569.8 192.4 L570.2 192.1 L570.5 191.9 L570.8 191.7 L571.2 191.5 L571.5 191.3 L571.8 191.1 L572.2 190.9 L572.5 190.7 L572.8 190.6 L573.2 190.3 L573.5 190.2 L573.8 190.0 L574.2 189.9 L574.5 189.7 L574.8 189.6 L575.2 189.5 L575.5 189.4 L575.8 189.3 L576.2 189.2 L576.5 189.2 L576.8 189.2 L577.2 189.2 L577.5 189.2 L577.8 189.2 L578.2 189.2 L578.5 189.2 L578.8 189.2 L579.2 189.2 L579.5 189.3 L579.8 189.3 L580.2 189.3 L580.5 189.3 L580.8 189.3 L581.2 189.3 L581.5 189.4 L581.8 189.4 L582.2 189.4 L582.5 189.4 L582.8 189.5 L583.2 189.5 L583.5 189.5 L583.8 189.5 L584.2 189.6 L584.5 189.6 L584.8 189.6 L585.2 189.7 L585.5 189.7 L585.8 189.7 L586.2 189.8 L586.5 189.7 L586.8 189.8 L587.2 189.8 L587.5 189.9 L587.8 189.9 L588.2 189.9 L588.5 190.0 L588.8 190.0 L589.2 190.0 L589.5 190.0 L589.8 190.0 L590.2 190.1 L590.5 190.0 L590.8 190.1 L591.2 190.1 L591.5 190.0 L591.8 190.0 L592.2 190.0 L592.5 190.0 L592.8 190.0 L593.2 189.9 L593.5 189.9 L593.8 189.8 L594.2 189.8 L594.5 189.7 L594.8 189.7 L595.2 189.6 L595.5 189.6 L595.8 189.5 L596.2 189.5 L596.5 189.4 L596.8 189.4 L597.2 189.3 L597.5 189.3 L597.8 189.2 L598.2 189.1 L598.5 189.1 L598.8 189.0 L599.2 189.0 L599.5 188.9 L599.8 188.9 L600.2 188.9 L600.5 188.8 L600.8 188.7 L601.2 188.7 L601.5 188.6 L601.8 188.6 L602.2 188.5 L602.5 188.5 L602.8 188.4 L603.2 188.4 L603.5 188.3 L603.8 188.3 L604.2 188.2 L604.5 188.2 L604.8 188.1 L605.2 188.0 L605.5 188.0 L605.8 187.9 L606.2 187.9 L606.5 187.9 L606.8 187.8 L607.2 187.7 L607.5 187.7 L607.8 187.6 L608.2 187.6 L608.5 187.5 L608.8 187.5 L609.2 187.4 L609.5 187.4 L609.8 187.4 L610.2 187.3 L610.5 187.2 L610.8 187.2 L611.2 187.1 L611.5 187.1 L611.8 187.0 L612.2 187.0 L612.5 186.9 L612.8 186.9 L613.2 186.8 L613.5 186.8 L613.8 186.7 L614.2 186.7 L614.5 186.6 L614.8 186.6 L615.2 186.5 L615.5 186.5 L615.8 186.4 L616.2 186.4 L616.5 186.3 L616.8 186.3 L617.2 186.2 L617.5 186.2 L617.8 186.1 L618.2 186.1 L618.5 186.1 L618.8 186.0 L619.2 186.0 L619.5 186.0 L619.8 185.9 L620.2 185.9 L620.5 185.9 L620.8 185.9 L621.2 185.9 L621.5 185.8 L621.8 185.8 L622.2 185.8 L622.5 185.8 L622.8 185.8 L623.2 185.7 L623.5 185.7 L623.8 185.7 L624.2 185.7 L624.5 185.7 L624.8 185.6 L625.2 185.6 L625.5 185.6 L625.8 185.6 L626.2 185.5 L626.5 185.5 L626.8 185.5 L627.2 185.5 L627.5 185.5 L627.8 185.5 L628.2 185.4 L628.5 185.4 L628.8 185.4 L629.2 185.4 L629.5 185.4 L629.8 185.3 L630.2 185.3 L630.5 185.3 L630.8 185.3 L631.2 185.3 L631.5 185.2 L631.8 185.2 L632.2 185.2 L632.5 185.2 L632.8 185.2 L633.2 185.1 L633.5 185.1 L633.8 185.1 L634.2 185.1 L634.5 185.1 L634.8 185.1 L635.2 185.0 L635.5 185.0 L635.8 185.0 L636.2 185.0 L636.5 185.0 L636.8 185.0 L637.2 185.0 L637.5 185.0 L637.8 184.9 L638.2 184.9 L638.5 184.9 L638.8 184.9 L639.2 184.9 L639.5 184.9 L639.8 184.9 L640.2 184.8 L640.5 184.8 L640.8 184.8 L641.2 184.8 L641.5 184.8 L641.8 184.8 L642.2 184.8 L642.5 184.8 L642.8 184.8 L643.2 184.7 L643.5 184.7 L643.8 184.7 L644.2 184.7 L644.5 184.7 L644.8 184.7 L645.2 184.7 L645.5 184.7 L645.8 184.7 L646.2 184.6 L646.5 184.6 L646.8 184.6 L647.2 184.6 L647.5 184.6 L647.8 184.6 L648.2 184.6 L648.5 184.6 L648.8 184.6 L649.2 184.5 L649.5 184.5 L649.8 184.5 L650.2 184.5 L650.5 184.5 L650.8 184.5 L651.2 184.5 L651.5 184.5 L651.8 184.5 L652.2 184.4 L652.5 184.4 L652.8 184.4 L653.2 184.4 L653.5 184.5 L653.8 184.4 L654.2 184.4 L654.5 184.4 L654.8 184.4 L655.2 184.4 L655.5 184.4 L655.8 184.4 L656.2 184.4 L656.5 184.5 L656.8 184.4 L657.2 184.4 L657.5 184.4 L657.8 184.4 L658.2 184.4 L658.5 184.4 L658.8 184.4 L659.2 184.4 L659.5 184.4 L659.8 184.4 L660.2 184.5 L660.5 184.5 L660.8 184.5 L661.2 184.5 L661.5 184.5 L661.8 184.5 L662.2 184.5 L662.5 184.5 L662.8 184.5 L663.2 184.5 L663.5 184.5 L663.8 184.5 L664.2 184.5 L664.5 184.5 L664.8 184.5 L665.2 184.5 L665.5 184.5 L665.8 184.5 L666.2 184.5 L666.5 184.5 L666.8 184.5 L667.2 184.5 L667.5 184.5 L667.8 184.5 L668.2 184.5 L668.5 184.5 L668.8 184.5 L669.2 184.5 L669.5 184.5 L669.8 184.5 L670.2 184.5 L670.5 184.5 L670.8 184.5 L671.2 184.5 L671.5 184.5 L671.8 184.5 L672.2 184.5 L672.5 184.5 L672.8 184.5 L673.2 184.6 L673.5 184.5 L673.8 184.5 L674.2 184.6 L674.5 184.6 L674.8 184.6 L675.2 184.6 L675.5 184.6 L675.8 184.6 L676.2 184.6 L676.5 184.6 L676.8 184.6 L677.2 184.6 L677.5 184.6 L677.8 184.6 L678.2 184.6 L678.5 184.6 L678.8 184.6 L679.2 184.6 L679.5 184.6 L679.8 184.6 L680.2 184.6 L680.5 184.6 L680.8 184.6 L681.2 184.6 L681.5 184.6 L681.8 184.6 L682.2 184.6 L682.5 184.7 L682.8 184.6 L683.2 184.7 L683.5 184.7 L683.8 184.7 L684.2 184.7 L684.5 184.7 L684.8 184.7 L685.2 184.7 L685.5 184.7 L685.8 184.7 L686.2 184.7 L686.5 184.7 L686.8 184.7 L687.2 184.7 L687.5 184.8 L687.8 184.7 L688.2 184.8 L688.5 184.8 L688.8 184.8 L689.2 184.8 L689.5 184.8 L689.8 184.8 L690.2 184.8 L690.5 184.8 L690.8 184.8 L691.2 184.8 L691.5 184.8 L691.8 184.8 L692.2 184.8 L692.5 184.8 L692.8 184.8 L693.2 184.9 L693.5 184.9 L693.8 184.9 L694.2 184.9 L694.5 184.9 L694.8 184.9 L695.2 184.9 L695.5 184.9 L695.8 184.9 L696.2 184.9 L696.5 184.9 L696.8 184.9 L697.2 184.9 L697.5 184.9 L697.8 185.0 L698.2 185.0 L698.5 185.0 L698.8 185.0 L699.2 185.0 L699.5 185.0 L699.8 185.0 L700.2 185.1 L700.5 185.1 L700.8 185.2 L701.2 185.2 L701.5 185.3 L701.8 185.3 L702.2 185.4 L702.5 185.4 L702.8 185.5 L703.2 185.5 L703.5 185.6 L703.8 185.7 L704.2 185.7 L704.5 185.8 L704.8 185.9 L705.2 186.0 L705.5 186.0 L705.8 186.1 L706.2 186.1 L706.5 186.2 L706.8 186.3 L707.2 186.3 L707.5 186.4 L707.8 186.5 L708.2 186.5 L708.5 186.6 L708.8 186.7 L709.2 186.7 L709.5 186.8 L709.8 186.9 L710.2 186.9 L710.5 187.0 L710.8 187.1 L711.2 187.1 L711.5 187.2 L711.8 187.2 L712.2 187.4 L712.5 187.4 L712.8 187.4 L713.2 187.5 L713.5 187.6 L713.8 187.6 L714.2 187.7 L714.5 187.8 L714.8 187.9 L715.2 187.9 L715.5 188.0 L715.8 188.1 L716.2 188.1 L716.5 188.2 L716.8 188.3 L717.2 188.3 L717.5 188.4 L717.8 188.5 L718.2 188.5 L718.5 188.6 L718.8 188.6 L719.2 188.7 L719.5 188.7 L719.8 188.8 L720.2 188.8 L720.5 188.8 L720.8 188.8 L721.2 188.8 L721.5 188.8 L721.8 188.8 L722.2 188.8 L722.5 188.8 L722.8 188.7 L723.2 188.7 L723.5 188.7 L723.8 188.6 L724.2 188.6 L724.5 188.6 L724.8 188.6 L725.2 188.5 L725.5 188.5 L725.8 188.5 L726.2 188.4 L726.5 188.4 L726.8 188.4 L727.2 188.3 L727.5 188.3 L727.8 188.3 L728.2 188.3 L728.5 188.2 L728.8 188.2 L729.2 188.1 L729.5 188.1 L729.8 188.1 L730.2 188.0 L730.5 188.0 L730.8 188.0 L731.2 187.9 L731.5 187.9 L731.8 187.8 L732.2 187.8 L732.5 187.8 L732.8 187.7 L733.2 187.7 L733.5 187.7 L733.8 187.6 L734.2 187.6 L734.5 187.6 L734.8 187.5 L735.2 187.5 L735.5 187.4 L735.8 187.4 L736.2 187.4 L736.5 187.3 L736.8 187.3 L737.2 187.3 L737.5 187.2 L737.8 187.2 L738.2 187.2 L738.5 187.2 L738.8 187.2 L739.2 187.2 L739.5 187.2 L739.8 187.2 L740.2 187.3 L740.5 187.3 L740.8 187.3 L741.2 187.4 L741.5 187.5 L741.8 187.5 L742.2 187.6 L742.5 187.7 L742.8 187.7 L743.2 187.8 L743.5 187.9 L743.8 188.0 L744.2 188.0 L744.5 188.1 L744.8 188.2 L745.2 188.3 L745.5 188.3 L745.8 188.4 L746.2 188.5 L746.5 188.6 L746.8 188.6 L747.2 188.8 L747.5 188.9 L747.8 189.0 L748.2 189.1 L748.5 189.2 L748.8 189.3 L749.2 189.5 L749.5 189.6 L749.8 189.8 L750.2 190.0 L750.5 190.1 L750.8 190.3 L751.2 190.5 L751.5 190.7 L751.8 190.9 L752.2 191.0 L752.5 191.2 L752.8 191.4 L753.2 191.6 L753.5 191.8 L753.8 192.0 L754.2 192.2 L754.5 192.3 L754.8 192.5 L755.2 192.7 L755.5 192.9 L755.8 193.0 L756.2 193.3 L756.5 193.4 L756.8 193.6 L757.2 193.8 L757.5 194.0 L757.8 194.1 L758.2 194.4 L758.5 194.5 L758.8 194.7 L759.2 194.9 L759.5 195.0 L759.8 195.2 L760.2 195.4 L760.5 195.5 L760.8 195.7 L761.2 195.9 L761.5 196.1 L761.8 196.2 L762.2 196.4 L762.5 196.5 L762.8 196.7 L763.2 196.9 L763.5 197.0 L763.8 197.1 L764.2 197.3 L764.5 197.4 L764.8 197.5 L765.2 197.6 L765.5 197.6 L765.8 197.7 L766.2 197.7 L766.5 197.7 L766.8 197.7 L767.2 197.7 L767.5 197.6 L767.8 197.7 L768.2 197.6 L768.5 197.5 L768.8 197.5 L769.2 197.5 L769.5 197.4 L769.8 197.4 L770.2 197.3 L770.5 197.3 L770.8 197.2 L771.2 197.2 L771.5 197.1 L771.8 197.1 L772.2 197.0 L772.5 197.0 L772.8 196.9 L773.2 196.9 L773.5 196.9 L773.8 196.8 L774.2 196.7 L774.5 196.7 L774.8 196.7 L775.2 196.6 L775.5 196.6 L775.8 196.5 L776.2 196.5 L776.5 196.4 L776.8 196.4 L777.2 196.4 L777.5 196.4 L777.8 196.4 L778.2 196.4 L778.5 196.5 L778.8 196.6 L779.2 196.7 L779.5 196.8 L779.8 197.0 L780.2 197.3 L780.5 197.5 L780.8 197.7 L781.2 198.1 L781.5 198.4 L781.8 198.8 L782.2 199.2 L782.5 199.6 L782.8 199.9 L783.2 200.4 L783.5 200.7 L783.8 201.2 L784.2 201.7 L784.5 202.1 L784.8 202.5 L785.2 203.1 L785.5 203.6 L785.8 204.1 L786.2 204.8 L786.5 205.4 L786.8 206.0 L787.2 206.8 L787.5 207.4 L787.8 208.0 L788.2 208.8 L788.5 209.4 L788.8 210.1 L789.2 210.9 L789.5 211.6 L789.8 212.2 L790.2 213.1 L790.5 213.7 L790.8 214.3 L791.2 215.1 L791.5 215.7 L791.8 216.3 L792.2 217.1 L792.5 217.6 L792.8 218.1 L793.2 218.8 L793.5 219.3 L793.8 219.8 L794.2 220.4 L794.5 221.0 L794.8 221.4 L795.2 222.1 L795.5 222.5 L795.8 222.9 L796.2 223.5 L796.5 224.0 L796.8 224.4 L797.2 225.0 L797.5 225.5 L797.8 225.9 L798.2 226.5 L798.5 226.8 L798.8 227.3 L799.2 227.7 L799.5 228.0 L799.8 228.4 L800.2 228.7 L800.5 228.9 L800.8 229.1 L801.2 229.2 L801.5 229.4 L801.8 229.4 L802.2 229.5 L802.5 229.5 L802.8 229.5 L803.2 229.5 L803.5 229.4 L803.8 229.3 L804.2 229.2 L804.5 229.1 L804.8 229.0 L805.2 228.9 L805.5 228.8 L805.8 228.7 L806.2 228.6 L806.5 228.5 L806.8 228.5 L807.2 228.4 L807.5 228.5 L807.8 228.6 L808.2 228.8 L808.5 229.2 L808.8 229.6 L809.2 230.4 L809.5 231.2 L809.8 232.1 L810.2 233.5 L810.5 234.8 L810.8 236.3 L811.2 238.4 L811.5 240.2 L811.8 241.9 L812.2 244.6 L812.5 246.5 L812.8 248.7 L813.2 251.6 L813.5 253.9 L813.8 256.2 L814.2 259.3 L814.5 261.6 L814.8 264.0 L815.2 267.1 L815.5 269.5 L815.8 271.7 L816.2 274.8 L816.5 277.0 L816.8 279.4 L817.2 282.1 L817.5 284.2 L817.8 286.3 L818.2 289.2 L818.5 291.1 L818.8 293.3 L819.2 296.1 L819.5 298.0 L819.8 300.1 L820.2 302.8 L820.5 304.9 L820.8 306.8 L821.2 309.6 L821.5 311.6 L821.8 313.5 L822.2 316.0 L822.5 318.0 L822.8 319.9 L823.2 322.4 L823.5 324.3 L823.8 325.8 L824.2 328.5 L824.5 329.8 L824.8 331.5 L825.2 333.4 L825.5 335.4 L825.8 336.5 L826.2 338.6 L826.5 340.1 L826.8 341.6 L827.2 343.7 L827.5 345.3 L827.8 347.0 L828.2 348.8 L828.5 350.1 L828.8 351.8 L829.2 353.6 L829.5 354.9 L829.8 356.7 L830.2 358.4 L830.5 360.1 L830.8 361.3 L831.2 363.3 L831.5 364.5 L831.8 366.2 L832.2 368.1 L832.5 369.6 L832.8 371.0 L833.2 372.8 L833.5 374.1 L833.8 375.4 L834.2 377.6 L834.5 379.0 L834.8 380.0 L835.2 382.1 L835.5 383.4 L835.8 384.7 L836.2 387.1 L836.5 387.8 L836.8 390.2 L837.2 391.5 L837.5 392.7 L837.8 393.8 L838.2 395.2 L838.5 396.9 L838.8 398.2 L839.2 399.8 L839.5 401.3 L839.8 401.8 L840.2 404.0 L840.5 405.1 L840.8 405.5 L841.2 407.6 L841.5 408.5 L841.8 409.5 L842.2 411.3 L842.5 412.8 L842.8 413.3 L843.2 415.2 L843.5 415.7 L843.8 417.1 L844.2 418.1 L844.5 419.5 L844.8 420.9 L845.2 421.3 L845.5 424.6 L845.8 423.8 L846.2 424.8 L846.5 427.6 L846.8 426.8 L847.2 427.7 L847.5 432.0 L847.8 430.9 L848.2 432.6 L848.5 433.6 L848.8 435.5 L849.2 434.2 L849.5 435.6 L849.8 436.3 L850.2 437.6 L850.5 438.2 L850.8 440.8 L851.2 442.3 L851.5 442.2 L851.8 443.2 L852.2 444.4 L852.5 445.9 L852.8 449.1 L853.2 449.3 L853.5 450.0 L853.8 449.6 L854.2 452.9 L854.5 451.3 L854.8 453.3 L855.2 456.0 L855.5 454.8 L855.8 456.8 L856.2 457.9 L856.5 458.0 L856.8 460.3 L857.2 460.0 L857.5 463.0 L857.8 468.8 L858.2 465.7 L858.5 464.1 L858.8 466.6 L859.2 466.0 L859.5 468.2 L859.8 468.8 L860.2 472.0 L860.5 470.3 L860.8 472.1 L861.2 475.5 L861.5 473.8 L861.8 475.5 L862.2 481.1 L862.5 479.4 L862.8 478.6 L863.2 484.8 L863.5 484.6 L863.8 481.5 L864.2 480.9 L864.5 483.4 L864.8 482.8 L865.2 486.9 L865.5 486.8 L865.8 492.1 L866.2 486.9 L866.5 487.5 L866.8 490.1 L867.2 492.1 L867.5 491.6 L867.8 493.3 L868.2 497.2 L868.5 495.6 L868.8 494.1 L869.2 498.2 L869.5 497.7 L869.8 495.4 L870.2 497.3 L870.5 498.2 L870.8 498.6 L871.2 500.3 L871.5 498.2 L871.8 500.8 L872.2 502.5 L872.5 506.6 L872.8 503.3 L873.2 504.1 L873.5 506.3 L873.8 505.7 L874.2 503.6 L874.5 507.5 L874.8 507.0 L875.2 507.2 L875.5 513.3 L875.8 509.0 L876.2 512.7 L876.5 513.0 L876.8 511.5 L877.2 511.4 L877.5 519.4 L877.8 514.6 L878.2 513.6 L878.5 519.9 L878.8 517.1 L879.2 518.1 L879.5 527.2 L879.8 518.2 L880.2 521.6 L880.5 521.7 L880.8 524.9 L881.2 520.7 L881.5 525.5 L881.8 525.5 L882.2 523.7 L882.5 527.2 L882.8 525.7 L883.2 531.5 L883.5 530.4 L883.8 528.7 L884.2 528.8 L884.5 527.6 L884.8 537.0 L885.2 535.4 L885.5 533.6 L885.8 531.6 L886.2 530.9 L886.5 531.6 L886.8 539.5 L887.2 533.4 L887.5 535.6 L887.8 537.2 L888.2 536.1 L888.5 540.4 L888.8 537.4 L889.2 544.3 L889.5 540.9 L889.8 540.4 L890.2 545.9 L890.5 539.7 L890.8 543.9 L891.2 549.1 L891.5 545.2 L891.8 548.3 L892.2 543.9 L892.5 544.9 L892.8 561.7 L893.2 545.7 L893.5 548.3 L893.8 549.0 L894.2 554.0 L894.5 548.3 L894.8 566.3 L895.2 550.9 L895.5 556.3 L895.8 550.6 L896.2 550.7 L896.5 561.8 L896.8 558.9 L897.2 559.3 L897.5 567.6 L897.8 560.3 L898.2 551.4 L898.5 553.1 L898.8 565.9 L899.2 561.0 L899.5 561.7 L899.8 560.0 L900.2 565.2 L900.5 564.2 L900.8 554.8 L901.2 557.3 L901.5 562.2 L901.8 561.2 L902.2 564.5 L902.5 560.6 L902.8 560.6 L903.2 566.7 L903.5 561.8 L903.8 561.4 L904.2 562.2 L904.5 562.0 L904.8 570.8 L905.2 566.3 L905.5 567.2 L905.8 569.9 L906.2 571.0 L906.5 568.8 L906.8 569.7 L907.2 566.4 L907.5 571.7 L907.8 568.1 L908.2 565.0 L908.5 573.6 L908.8 563.7 L909.2 572.1 L909.5 582.5 L909.8 565.7 L910.2 568.7 L910.5 587.6 L910.8 586.2 L911.2 564.9 L911.5 572.3 L911.8 580.4 L912.2 572.6 L912.5 571.0 L912.8 574.2 L913.2 578.6 L913.5 576.9 L913.8 573.1 L914.2 571.6 L914.5 572.7 L914.8 594.8 L915.2 578.6 L915.5 580.1 L915.8 579.8 L916.2 582.2 L916.5 574.6 L916.8 582.9 L917.2 573.8 L917.5 573.4 L917.8 593.1 L918.2 583.4 L918.5 576.0 L918.8 590.7 L919.2 574.6 L919.5 593.1 L919.8 584.9 L920.2 585.5 L920.5 585.0 L920.8 581.6 L921.2 581.2 L921.5 588.7 L921.8 575.6 L922.2 576.0 L922.5 596.6 L922.8 588.7 L923.2 604.5 L923.5 594.3 L923.8 582.9 L924.2 596.5 L924.5 577.6 L924.8 585.2 L925.2 582.2 L925.5 596.1 L925.8 602.7 L926.2 579.2 L926.5 593.0 L926.8 595.7 L927.2 590.1 L927.5 588.7 L927.8 587.9 L928.2 604.7 L928.5 603.8 L928.8 579.1 L929.2 598.5 L929.5 598.8 L929.8 607.7 L930.2 610.6 L930.5 588.4 L930.8 579.7 L931.2 581.1 L931.5 598.2 L931.8 598.8 L932.2 587.4 L932.5 599.4 L932.8 588.5 L933.2 596.1 L933.5 586.2 L933.8 580.4 L934.2 596.4 L934.5 592.3 L934.8 594.3 L935.2 600.9 L935.5 595.3 L935.8 597.4 L936.2 607.7 L936.5 600.0 L936.8 582.2 L937.2 604.1 L937.5 606.0 L937.8 587.6 L938.2 589.2 L938.5 594.5 L938.8 601.7 L939.2 607.7 L939.5 590.2 L939.8 612.2 L940.2 599.8 L940.5 593.5 L940.8 602.6 L941.2 591.2 L941.5 601.4 L941.8 606.7 L942.2 606.5 L942.5 595.8 L942.8 627.3 L943.2 620.1 L943.5 601.4 L943.8 601.3 L944.2 624.0 L944.5 601.2 L944.8 590.3 L945.2 588.7 L945.5 610.2 L945.8 588.1 L946.2 604.1 L946.5 578.2 L946.8 605.1 L947.2 583.3 L947.5 590.6 L947.8 592.1 L948.2 587.8 L948.5 591.0 L948.8 584.9 L949.2 598.8 L949.5 593.8 L949.8 600.2 L950.2 598.5 L950.5 605.1 L950.8 635.0 L951.2 607.1 L951.5 596.8 L951.8 600.8 L952.2 611.9 L952.5 605.4 L952.8 597.8 L953.2 601.5 L953.5 622.3 L953.8 635.0 L954.2 587.4 L954.5 602.8 L954.8 606.5 L955.2 635.0 L955.5 604.4 L955.8 597.5 L956.2 616.9 L956.5 603.1 L956.8 601.9 L957.2 594.9 L957.5 610.8 L957.8 600.9 L958.2 602.7 L958.5 594.9 L958.8 591.0 L959.2 613.3 L959.5 626.2 L959.8 620.1 L960.2 592.8 L960.5 618.4 L960.8 604.6 L961.2 616.8 L961.5 594.7 L961.8 598.5 L962.2 586.2 L962.5 597.7 L962.8 621.1 L963.2 615.6 L963.5 602.3 L963.8 631.3 L964.2 606.7 L964.5 615.3 L964.8 612.5 L965.2 620.7 L965.5 618.9 L965.8 616.4 L966.2 595.5 L966.5 635.0 L966.8 590.1 L967.2 608.4 L967.5 618.8 L967.8 606.9 L968.2 594.0 L968.5 585.9 L968.8 585.9 L969.2 599.3 L969.5 604.7 L969.8 635.0 L970.2 597.0 L970.5 593.7 L970.8 595.7 L971.2 613.0 L971.5 595.8 L971.8 596.8 L972.2 618.1 L972.5 593.3 L972.8 592.4 L973.2 592.9 L973.5 590.5 L973.8 595.0 L974.2 606.7 L974.5 595.4 L974.8 613.3 L975.2 595.2 L975.5 622.7 L975.8 591.8 L976.2 602.0 L976.5 600.6 L976.8 613.9 L977.2 596.5 L977.5 603.2 L977.8 602.0 L978.2 606.0 L978.5 598.9 L978.8 583.4 L979.2 629.1 L979.5 597.5 L979.8 593.5 L980.2 593.6 L980.5 593.1 L980.8 591.8 L981.2 616.5 L981.5 628.5 L981.8 635.0 L982.2 626.3 L982.5 605.1 L982.8 614.2 L983.2 615.9 L983.5 627.0 L983.8 604.3 L984.2 628.7 L984.5 604.6 L984.8 587.6 L985.2 603.4 L985.5 591.1 L985.8 626.8 L986.2 607.3 L986.5 607.6 L986.8 588.1 L987.2 625.4 L987.5 607.2 L987.8 599.9 L988.2 603.5 L988.5 618.0 L988.8 587.6 L989.2 594.4 L989.5 622.3 L989.8 611.9 L990.2 603.2 L990.5 595.8 L990.8 604.0 L991.2 602.7 L991.5 602.1 L991.8 605.8 L992.2 585.2 L992.5 634.8 L992.8 593.8 L993.2 596.4 L993.5 607.8 L993.8 597.2 L994.2 623.7 L994.5 605.7 L994.8 620.9 L995.2 607.1 L995.5 591.2 L995.8 622.9 L996.2 594.2 L996.5 613.7 L996.8 614.8 L997.2 617.2 L997.5 610.4 L997.8 606.8 L998.2 595.1 L998.5 594.8 L998.8 595.8 L999.2 620.4 L999.5 615.1 L999.8 610.6 L1000.2 599.0 L1000.5 609.5 L1000.8 600.6 L1001.2 593.9 L1001.5 610.2 L1001.8 593.2 L1002.2 613.6 L1002.5 593.4 L1002.8 606.8 L1003.2 586.5 L1003.5 614.3 L1003.8 627.8 L1004.2 607.9 L1004.5 610.8 L1004.8 588.1 L1005.2 614.5 L1005.5 600.8 L1005.8 610.2 L1006.2 599.7 L1006.5 593.4 L1006.8 599.4 L1007.2 635.0 L1007.5 591.6 L1007.8 604.2 L1008.2 616.7 L1008.5 600.6 L1008.8 613.7 L1009.2 589.3 L1009.5 590.2 L1009.8 605.7 L1010.2 600.0 L1010.5 603.2 L1010.8 609.0 L1011.2 635.0 L1011.5 619.2 L1011.8 613.2 L1012.2 626.3 L1012.5 616.7 L1012.8 600.3 L1013.2 602.8 L1013.5 635.0 L1013.8 589.0 L1014.2 618.2 L1014.5 604.6 L1014.8 612.6 L1015.2 594.6 L1015.5 607.9 L1015.8 618.3 L1016.2 605.2 L1016.5 596.6 L1016.8 591.8 L1017.2 592.9 L1017.5 605.3 L1017.8 624.7 L1018.2 616.6 L1018.5 609.3 L1018.8 603.4 L1019.2 583.4 L1019.5 597.8 L1019.8 591.5 L1020.2 603.6 L1020.5 595.3 L1020.8 607.9 L1021.2 624.2 L1021.5 607.7 L1021.8 584.0 L1022.2 595.2 L1022.5 595.2 L1022.8 609.6 L1023.2 588.7 L1023.5 604.4 L1023.8 599.3 L1024.2 601.8 L1024.5 605.4 L1024.8 589.8 L1025.2 608.6 L1025.5 588.2 L1025.8 631.8 L1026.2 607.4 L1026.5 598.0 L1026.8 630.1 L1027.2 620.5 L1027.5 598.2 L1027.8 602.4 L1028.2 596.0 L1028.5 616.1 L1028.8 589.8 L1029.2 606.8 L1029.5 624.7 L1029.8 593.6 L1030.2 598.9 L1030.5 619.3 L1030.8 601.8 L1031.2 612.8 L1031.5 600.7 L1031.8 603.2 L1032.2 597.9 L1032.5 623.4 L1032.8 586.4 L1033.2 600.6 L1033.5 609.7 L1033.8 606.5 L1034.2 597.6 L1034.5 624.2 L1034.8 612.7 L1035.2 612.0 L1035.5 619.4 L1035.8 610.5 L1036.2 619.6 L1036.5 611.4 L1036.8 602.8 L1037.2 617.5 L1037.5 607.7 L1037.8 588.8 L1038.2 592.6 L1038.5 595.5 L1038.8 624.7 L1039.2 612.2 L1039.5 635.0 L1039.8 593.8 L1040.2 635.0 L1040.5 615.4 L1040.8 588.9 L1041.2 602.5 L1041.5 630.8 L1041.8 594.5 L1042.2 604.4 L1042.5 610.7 L1042.8 616.3 L1043.2 621.5 L1043.5 594.9 L1043.8 615.0 L1044.2 600.7 L1044.5 592.8 L1044.8 593.4 L1045.2 591.9 L1045.5 603.2 L1045.8 619.4 L1046.2 608.1 L1046.5 607.8 L1046.8 616.1 L1047.2 589.5 L1047.5 596.3 L1047.8 590.9 L1048.2 635.0 L1048.5 635.0 L1048.8 613.7 L1049.2 631.4 L1049.5 606.8 L1049.8 604.9 L1050.2 593.6 L1050.5 616.9 L1050.8 603.1 L1051.2 592.4 L1051.5 604.4 L1051.8 615.7 L1052.2 610.3 L1052.5 605.1 L1052.8 602.6 L1053.2 604.4 L1053.5 596.5 L1053.8 590.5 L1054.2 601.3 L1054.5 612.9 L1054.8 584.7 L1055.2 613.2 L1055.5 599.6 L1055.8 603.7 L1056.2 593.8 L1056.5 625.1 L1056.8 591.1 L1057.2 602.8 L1057.5 591.0 L1057.8 610.9 L1058.2 598.0 L1058.5 597.2 L1058.8 604.8 L1059.2 608.9 L1059.5 596.6 L1059.8 596.7 L1060.2 620.1 L1060.5 602.8 L1060.8 630.0 L1061.2 622.3 L1061.5 621.4 L1061.8 612.4 L1062.2 610.7 L1062.5 616.0 L1062.8 610.5 L1063.2 583.1 L1063.5 635.0 L1063.8 616.4 L1064.2 608.9 L1064.5 609.4 L1064.8 604.2 L1065.2 603.0 L1065.5 613.6 L1065.8 623.3 L1066.2 609.0 L1066.5 604.9 L1066.8 596.6 L1067.2 602.4 L1067.5 611.6 L1067.8 599.2 L1068.2 622.1 L1068.5 630.6 L1068.8 597.0 L1069.2 596.5 L1069.5 605.0 L1069.8 612.0 L1070.2 604.7 L1070.5 615.2 L1070.8 609.7 L1071.2 596.1 L1071.5 591.0 L1071.8 606.2 L1072.2 635.0 L1072.5 606.5 L1072.8 615.0 L1073.2 614.8 L1073.5 608.1 L1073.8 626.0 L1074.2 611.6 L1074.5 635.0 L1074.8 607.1 L1075.2 606.4 L1075.5 609.6 L1075.8 594.9 L1076.2 611.4 L1076.5 635.0 L1076.8 605.0 L1077.2 592.5 L1077.5 629.7 L1077.8 602.9 L1078.2 626.7 L1078.5 610.2 L1078.8 603.4 L1079.2 596.5 L1079.5 597.7 L1079.8 612.9 L1080.2 616.8 L1080.5 591.3 L1080.8 604.9 L1081.2 606.0 L1081.5 595.8 L1081.8 596.1 L1082.2 610.6 L1082.5 614.1 L1082.8 598.5 L1083.2 620.1 L1083.5 635.0 L1083.8 587.8 L1084.2 611.5 L1084.5 606.9 L1084.8 602.4 L1085.2 611.9 L1085.5 591.2 L1085.8 599.2 L1086.2 593.3 L1086.5 589.2 L1086.8 616.9 L1087.2 610.1 L1087.5 590.2 L1087.8 614.3 L1088.2 610.5 L1088.5 595.1 L1088.8 591.3 L1089.2 612.2 L1089.5 601.4 L1089.8 597.4 L1090.2 602.4 L1090.5 604.9 L1090.8 617.5 L1091.2 590.9 L1091.5 605.5 L1091.8 622.7 L1092.2 611.7 L1092.5 595.5 L1092.8 599.4 L1093.2 614.2 L1093.5 588.1 L1093.8 611.2 L1094.2 605.7 L1094.5 612.1 L1094.8 600.4 L1095.2 597.4 L1095.5 604.3 L1095.8 591.6 L1096.2 627.7 L1096.5 606.5 L1096.8 602.9 L1097.2 605.7 L1097.5 591.0 L1097.8 602.0 L1098.2 606.7 L1098.5 602.0 L1098.8 593.3 L1099.2 606.4 L1099.5 595.7 L1099.8 619.0 L1100.2 600.0 L1100.5 614.2 L1100.8 598.9 L1101.2 616.5 L1101.5 588.0 L1101.8 587.1 L1102.2 592.7 L1102.5 617.6 L1102.8 599.7 L1103.2 608.0 L1103.5 592.8 L1103.8 603.7 L1104.2 597.9 L1104.5 616.9 L1104.8 594.2 L1105.2 606.9 L1105.5 604.9 L1105.8 630.4 L1106.2 590.7 L1106.5 607.9 L1106.8 603.2 L1107.2 591.8 L1107.5 611.3 L1107.8 604.3 L1108.2 603.0 L1108.5 615.6 L1108.8 601.7 L1109.2 592.2 L1109.5 606.5 L1109.8 616.3 L1110.2 618.9 L1110.5 612.6 L1110.8 609.6 L1111.2 603.2 L1111.5 618.0 L1111.8 608.0 L1112.2 609.4 L1112.5 626.8 L1112.8 614.7 L1113.2 601.7 L1113.5 623.5 L1113.8 594.4 L1114.2 628.7 L1114.5 593.8 L1114.8 604.4 L1115.2 593.2 L1115.5 614.2 L1115.8 617.1 L1116.2 619.0 L1116.5 596.7 L1116.8 611.8 L1117.2 599.1 L1117.5 599.6 L1117.8 600.8 L1118.2 603.8 L1118.5 586.9 L1118.8 609.6 L1119.2 595.3 L1119.5 626.7 L1119.8 618.9 L1120.2 618.5 L1120.5 609.6 L1120.8 611.8 L1121.2 608.3 L1121.5 605.5 L1121.8 602.0 L1122.2 615.9 L1122.5 611.8 L1122.8 601.0 L1123.2 609.3 L1123.5 605.1 L1123.8 618.2 L1124.2 600.1 L1124.5 612.4 L1124.8 600.7 L1125.2 611.4 L1125.5 628.8 L1125.8 595.5 L1126.2 606.8 L1126.5 613.5 L1126.8 590.4 L1127.2 610.4 L1127.5 623.7 L1127.8 617.7 L1128.2 602.9 L1128.5 611.7 L1128.8 616.2 L1129.2 608.5 L1129.5 618.0 L1129.8 603.0 L1130.2 595.2 L1130.5 611.2 L1130.8 611.7 L1131.2 613.0 L1131.5 619.3 L1131.8 617.6 L1132.2 582.7 L1132.5 634.3 L1132.8 597.6 L1133.2 608.5 L1133.5 609.9 L1133.8 620.9 L1134.2 593.4 L1134.5 635.0 L1134.8 605.5 L1135.2 608.1 L1135.5 596.0 L1135.8 605.8 L1136.2 635.0 L1136.5 618.8 L1136.8 610.8 L1137.2 593.0 L1137.5 595.0 L1137.8 617.1 L1138.2 613.7 L1138.5 626.6 L1138.8 605.4 L1139.2 596.8 L1139.5 620.5 L1139.8 630.6 L1140.2 616.1 L1140.5 611.9 L1140.8 599.3 L1141.2 605.8 L1141.5 595.0 L1141.8 628.9 L1142.2 600.5 L1142.5 597.8 L1142.8 606.9 L1143.2 608.0 L1143.5 604.1 L1143.8 614.3 L1144.2 610.9 L1144.5 598.4 L1144.8 635.0 L1145.2 635.0 L1145.5 597.4 L1145.8 593.2 L1146.2 608.3 L1146.5 619.8 L1146.8 615.6 L1147.2 627.2 L1147.5 610.4 L1147.8 634.3 L1148.2 621.7 L1148.5 614.9 L1148.8 614.9 L1149.2 604.7 L1149.5 623.6 L1149.8 635.0 L1150.2 593.6 L1150.5 620.0 L1150.8 623.2 L1151.2 611.4 L1151.5 598.7 L1151.8 602.0 L1152.2 596.9 L1152.5 635.0 L1152.8 629.3 L1153.2 598.8 L1153.5 605.7 L1153.8 610.4 L1154.2 602.3 L1154.5 613.1 L1154.8 635.0 L1155.2 635.0 L1155.5 635.0 L1155.8 605.8 L1156.2 593.4 L1156.5 601.3 L1156.8 607.6 L1157.2 606.8 L1157.5 600.9 L1157.8 612.6 L1158.2 598.8 L1158.5 613.4 L1158.8 599.5 L1159.2 598.9 L1159.5 597.5 L1159.8 587.4 L1160.2 614.8 L1160.5 604.2 L1160.8 617.5 L1161.2 600.1 L1161.5 618.3 L1161.8 594.1 L1162.2 609.5 L1162.5 593.1 L1162.8 627.4 L1163.2 602.0 L1163.5 604.5 L1163.8 603.4 L1164.2 622.7 L1164.5 599.7 L1164.8 608.5 L1165.2 607.9 L1165.5 590.1 L1165.8 601.0 L1166.2 601.4 L1166.5 610.4 L1166.8 604.5 L1167.2 621.1 L1167.5 610.5 L1167.8 604.1 L1168.2 629.7 L1168.5 605.8 L1168.8 619.4 L1169.2 589.0 L1169.5 595.4 L1169.8 615.3 L1170.2 611.8 L1170.5 613.9 L1170.8 613.0 L1171.2 615.0 L1171.5 613.0 L1171.8 610.7 L1172.2 600.3 L1172.5 612.8 L1172.8 598.1 L1173.2 610.4 L1173.5 631.6 L1173.8 616.9 L1174.2 599.5 L1174.5 592.9 L1174.8 605.6 L1175.2 626.9 L1175.5 622.1 L1175.8 597.6 L1176.2 633.9 L1176.5 599.2 L1176.8 602.9 L1177.2 621.3 L1177.5 598.9 L1177.8 610.8 L1178.2 594.6 L1178.5 614.2 L1178.8 596.2 L1179.2 608.3 L1179.5 599.3 L1179.8 591.4 L1180.2 635.0 L1180.5 592.4 L1180.8 605.5 L1181.2 634.4 L1181.5 631.5 L1181.8 613.0 L1182.2 594.4 L1182.5 608.7 L1182.8 608.7 L1183.2 585.9 L1183.5 591.8 L1183.8 594.0 L1184.2 627.6 L1184.5 614.2 L1184.8 633.3 L1185.2 596.4 L1185.5 591.7 L1185.8 604.1 L1186.2 594.4 L1186.5 592.3 L1186.8 606.1 L1187.2 631.0 L1187.5 604.2 L1187.8 635.0 L1188.2 608.4 L1188.5 622.6 L1188.8 596.6 L1189.2 594.9 L1189.5 635.0 L1189.8 608.6 L1190.2 604.3 L1190.5 603.3 L1190.8 635.0 L1191.2 597.6 L1191.5 610.5 L1191.8 598.4 L1192.2 604.2 L1192.5 633.6 L1192.8 613.7 L1193.2 608.5 L1193.5 596.0 L1193.8 611.9 L1194.2 622.6 L1194.5 616.6 L1194.8 590.6 L1195.2 613.0 L1195.5 604.3 L1195.8 599.7 L1196.2 622.4 L1196.5 604.0 L1196.8 633.0 L1197.2 604.3 L1197.5 604.8 L1197.8 592.1 L1198.2 606.7 L1198.5 616.0 L1198.8 594.3 L1199.2 616.9 L1199.5 593.5 L1199.8 614.5 L1200.2 590.5 L1200.5 631.1 L1200.8 608.3 L1201.2 635.0 L1201.5 589.6 L1201.8 610.8 L1202.2 604.3 L1202.5 599.6 L1202.8 600.8 L1203.2 622.9 L1203.5 626.6 L1203.8 603.3 L1204.2 596.4 L1204.5 615.6 L1204.8 609.6 L1205.2 601.7 L1205.5 599.7 L1205.8 607.5 L1206.2 597.7 L1206.5 628.4 L1206.8 599.6 L1207.2 594.9 L1207.5 614.7 L1207.8 620.6 L1208.2 607.1 L1208.5 633.5 L1208.8 607.9 L1209.2 611.8 L1209.5 596.4 L1209.8 611.7 L1210.2 589.4 L1210.5 600.0 L1210.8 589.5 L1211.2 590.7 L1211.5 590.3 L1211.8 601.3 L1212.2 591.7 L1212.5 604.7 L1212.8 597.1 L1213.2 609.9 L1213.5 589.4 L1213.8 612.8 L1214.2 603.3 L1214.5 603.0 L1214.8 595.4 L1215.2 606.1 L1215.5 594.1 L1215.8 600.5 L1216.2 614.6 L1216.5 591.4 L1216.8 600.1 L1217.2 589.5 L1217.5 606.3 L1217.8 603.1 L1218.2 589.8 L1218.5 595.9 L1218.8 582.9 L1219.2 597.0 L1219.5 606.3 L1219.8 595.0 L1220.2 620.9 L1220.5 608.7 L1220.8 593.6 L1221.2 610.3 L1221.5 596.5 L1221.8 605.4 L1222.2 602.6 L1222.5 613.9 L1222.8 595.8 L1223.2 603.8 L1223.5 594.6 L1223.8 593.0 L1224.2 596.8 L1224.5 595.1 L1224.8 630.1 L1225.2 623.0 L1225.5 607.4 L1225.8 594.8 L1226.2 601.0 L1226.5 611.0 L1226.8 604.4 L1227.2 593.6 L1227.5 590.2 L1227.8 602.5 L1228.2 597.6 L1228.5 624.1 L1228.8 592.9 L1229.2 607.0 L1229.5 598.4 L1229.8 600.2 L1230.2 626.2 L1230.5 601.1 L1230.8 622.7 L1231.2 598.4 L1231.5 606.1 L1231.8 606.4 L1232.2 607.1 L1232.5 592.9 L1232.8 613.6 L1233.2 599.3 L1233.5 601.8 L1233.8 603.0 L1234.2 617.7 L1234.5 618.1 L1234.8 619.0 L1235.2 631.3 L1235.5 615.2 L1235.8 602.9 L1236.2 604.1 L1236.5 623.8 L1236.8 630.9 L1237.2 613.9 L1237.5 626.8 L1237.8 596.6 L1238.2 598.1 L1238.5 611.3 L1238.8 596.6 L1239.2 610.4 L1239.5 635.0 L1239.8 598.9 L1240.2 601.9 L1240.5 593.4 L1240.8 610.6 L1241.2 602.8 L1241.5 603.9 L1241.8 631.3 L1242.2 607.5 L1242.5 617.6 L1242.8 604.7 L1243.2 615.9 L1243.5 623.4 L1243.8 610.4 L1244.2 605.9 L1244.5 619.7 L1244.8 596.3 L1245.2 599.7 L1245.5 597.5 L1245.8 620.6 L1246.2 609.8 L1246.5 609.9 L1246.8 623.9 L1247.2 619.5 L1247.5 611.5" fill="none" stroke="#004080" stroke-width="1"/>
<g fill="none" stroke="#004080" stroke-width="1">
 <path d="M647 176.5h10M647.5 177l4 6.5M656.5 177l-4 6.5M649.5 177l3 5M654.5 177l-2 3.5"/>
 <path d="M434 487.5h8M434.5 488l3.5 5.5 3.5-5.5"/>
 <path d="M863 487.5h8M863.5 488l3.5 5.5 3.5-5.5"/>
</g>
</svg>
<svg class="ic" style="left:0;top:0" width="1280" height="800" shape-rendering="crispEdges"><g fill="#004080">
<rect x="651" y="166" width="1" height="9"/><rect x="649" y="167" width="2" height="1"/><rect x="650" y="166" width="1" height="1"/>
<rect x="654" y="166" width="1" height="9"/><rect x="651" y="172" width="5" height="1"/><rect x="653" y="167" width="1" height="1"/><rect x="652" y="168" width="1" height="2"/>
</g></svg>
<div class="t" style="left:435px;top:475.5px;font-size:12px;color:#004080">2</div>
<div class="t" style="left:864px;top:475.5px;font-size:12px;color:#004080">3</div>

<!-- ========== bottom controls ========== -->
<div class="sunk" style="left:7px;top:685px;width:59px;height:21px"></div>
<div class="btn" style="left:48px;top:687px;width:17px;height:17px"></div>
<svg class="ic" style="left:53px;top:694px" width="8" height="5"><path d="M0 0h7l-3.5 4z" fill="#000"/></svg>
<div class="btn" style="left:69px;top:685px;width:29px;height:21px"></div>
<div class="sunk" style="left:102px;top:685px;width:60px;height:21px"></div>
<div class="btn" style="left:144px;top:687px;width:17px;height:17px"></div>
<svg class="ic" style="left:149px;top:694px" width="8" height="5"><path d="M0 0h7l-3.5 4z" fill="#000"/></svg>
<div class="sunk" style="left:176px;top:663px;width:13px;height:13px"></div>
<div class="sunk" style="left:176px;top:685px;width:13px;height:13px"></div>
<svg class="ic" style="left:178px;top:687px" width="9" height="9"><path d="M1.5 4l2 2.5 4-5" fill="none" stroke="#000" stroke-width="1.8"/></svg>
<div class="btn" style="left:1199px;top:664px;width:78px;height:21px"></div>
<div class="btn" style="left:1199px;top:685px;width:78px;height:21px"></div>

<!-- status bar -->
<div class="a" style="left:3px;top:708px;width:1276px;height:1px;background:#aca899"></div>
<div class="a" style="left:3px;top:710px;width:1px;height:14px;background:#c4c0b0"></div><div class="a" style="left:55px;top:708px;width:126px;height:17px;background:#FFFFE1;border:1px solid #000"></div>

<!-- ========== XP taskbar ========== -->
<div class="a" style="left:3px;top:724px;width:1276px;height:1px;background:#fbfaf0"></div><div class="a" style="left:3px;top:725px;width:1276px;height:30px;background:linear-gradient(#1f55cc 0,#2a62d6 1px,#4a8fe6 2px,#4a8fe6 3px,#2e6ad8 5px,#2157d6 7px,#2259d8 15px,#2562de 26px,#2360dc 27px,#1a48c0 28px,#0a32a0 30px)"></div>
<div class="a" style="left:3px;top:725px;width:102px;height:30px;border-radius:0 13px 13px 0;background:radial-gradient(ellipse 60px 30px at 45% 55%,rgba(80,210,80,.35),rgba(0,0,0,0)),linear-gradient(#3a9a3a 0,#6ccc6c 2px,#52bc52 5px,#3eac3e 14px,#3aa83a 22px,#2f942f 27px,#236f23 30px)"></div>
<svg class="ic" style="left:12px;top:730px" width="22" height="20" viewBox="0 0 22 20">
 <path d="M3 2.5Q6 1 9.5 2.5L8.5 9Q5.5 7.5 2 9Z" fill="#f35022"/>
 <path d="M11 3Q14.5 4.5 19 3L18 9.5Q14 11 10 9.5Z" fill="#80bb02"/>
 <path d="M2 10.5Q5.5 9 8.5 10.5L7.5 17Q4.5 15.5 1 17Z" fill="#05a6f0"/>
 <path d="M10 11Q14 12.5 18 11L17 17.5Q13 19 9 17.5Z" fill="#ffb902"/>
</svg>
<div class="a" style="left:115px;top:729px;width:160px;height:24px;border-radius:3px;background:#1e4fbf;border:1px solid #1a44a6;box-shadow:inset 1px 1px 0 #3a6ad0"></div>
<svg class="ic" style="left:126px;top:734px" width="17" height="16" viewBox="0 0 17 16">
 <rect x="0.5" y="0.5" width="16" height="13.5" rx="1" fill="#d8d2c6" stroke="#5a5448" stroke-width="1"/>
 <rect x="1.5" y="1.5" width="14" height="8.5" fill="#000" stroke="#22dd22" stroke-width="1"/>
 <path d="M3 9Q8.5 2 14 9" fill="none" stroke="#1aa0a8" stroke-width="1"/>
 <rect x="8" y="2" width="1" height="7" fill="#0a3a10"/>
 <circle cx="4" cy="11.5" r="1.3" fill="#001880"/><circle cx="12.5" cy="11.5" r="1.3" fill="#001880"/>
 <rect x="0" y="13.5" width="4" height="2.5" fill="#000"/><rect x="13" y="13.5" width="4" height="2.5" fill="#000"/>
 <rect x="3.5" y="12" width="1" height="2" fill="#000"/><rect x="12" y="12" width="1" height="2" fill="#000"/>
</svg>
<div class="a" style="left:1133px;top:732px;width:16px;height:16px;background:#3b6fce"></div>
<div class="a" style="left:1168px;top:725px;width:111px;height:30px;background:linear-gradient(#1089e6 0,#18a0f4 2px,#0f95ee 6px,#0e8fea 22px,#0c84df 30px);border-left:1px solid #0a5ac8"></div>
<svg class="ic" style="left:1158px;top:730px" width="22" height="22" viewBox="0 0 22 22">
 <circle cx="11" cy="11" r="9.5" fill="#2f8df2" stroke="#b8d4f4" stroke-width="1.2"/>
 <circle cx="11" cy="9" r="6" fill="#5eaaf8" opacity=".6"/>
 <path d="M13 6.5l-4 4.5 4 4.5" fill="none" stroke="#fff" stroke-width="2.4"/>
</svg>
<svg class="ic" style="left:1179px;top:731px" width="16" height="16" viewBox="0 0 16 16">
 <rect x="1" y="1" width="14" height="14" fill="#c10b0b" stroke="#7a0000" stroke-width=".8"/>
 <path d="M3 13Q7 7 9 3Q8 8 13 10Q8 9 3 13" fill="none" stroke="#fff" stroke-width="1"/>
</svg>
<svg class="ic" style="left:1197px;top:731px" width="18" height="18" viewBox="0 0 18 18">
 <rect x="0.5" y="0.5" width="13" height="13" fill="#8a8a8a" stroke="#555"/>
 <text x="1.5" y="10" font-family="Liberation Sans" font-size="8" font-weight="bold" fill="#fff">vm</text>
 <path d="M11 9l5 8h-10z" fill="#ffd200" stroke="#805a00" stroke-width=".8"/>
</svg>
<svg class="ic" style="left:1214px;top:731px" width="18" height="18" viewBox="0 0 18 18">
 <circle cx="8" cy="8" r="6.5" fill="#6d6d6d"/><circle cx="7" cy="7" r="3.5" fill="#b0b0b0"/>
 <path d="M8 16Q13 14 15 10M10 17Q15 15 17 11" fill="none" stroke="#9fb5f0" stroke-width=".8"/>
</svg>

<!-- ========== VMware status bar ========== -->
<div class="a" style="left:0;top:755px;width:1280px;height:1px;background:#f8f8f4"></div><div class="a" style="left:0;top:756px;width:1280px;height:2px;background:linear-gradient(#a9a79f,#cfcdc6)"></div>
<div class="a" style="left:0;top:758px;width:1280px;height:19px;background:#EDEDEB"></div>
<div class="a" style="left:1px;top:758px;width:1018px;height:19px;border:1px solid #c8c6bf;border-top:none;background:#EEEEEC"></div>
<div class="a" style="left:0;top:0;width:1px;height:777px;background:#2a3442"></div>
<svg class="ic" style="left:1023px;top:760px" width="16" height="14" viewBox="0 0 16 14"><rect x="0.5" y="0.5" width="15" height="13" rx="1.5" fill="#e8e8e6" stroke="#6d6d6b"/><path d="M1 7q7 3 14 0" fill="none" stroke="#c8c8c4"/><rect x="3" y="10" width="10" height="1" fill="#a0a09c"/></svg>
<svg class="ic" style="left:1043px;top:759px" width="16" height="16" viewBox="0 0 16 16"><circle cx="8" cy="8" r="7.5" fill="#e4e4e2" stroke="#777"/><circle cx="8" cy="8" r="2.2" fill="#fff" stroke="#666"/></svg>
<svg class="ic" style="left:1063px;top:759px" width="16" height="16" viewBox="0 0 16 16"><rect x="0.5" y="0.5" width="15" height="15" rx="1" fill="#fff" stroke="#3e6fc0"/><rect x="2" y="2" width="12" height="1.5" fill="#d43a2a"/><rect x="4" y="10" width="5" height="5" fill="#777"/><rect x="8" y="8" width="8" height="8" rx="1.5" fill="#c80c12"/><path d="M10 10l4 4M14 10l-4 4" stroke="#fff" stroke-width="1.4"/></svg>
<svg class="ic" style="left:1084px;top:760px" width="15" height="13" viewBox="0 0 15 13"><path d="M1 4l3-3 8 6-3 3z" fill="#e8e8e4" stroke="#777" stroke-width=".8"/><path d="M2 3l2-2" stroke="#e2c040" stroke-width="1.5"/><path d="M9 9l4 3.5" stroke="#333" stroke-width="2.2"/></svg>
<svg class="ic" style="left:1104px;top:760px" width="15" height="15" viewBox="0 0 15 15"><rect x="3.5" y="0.5" width="8" height="6" fill="#fff" stroke="#888"/><rect x="0.5" y="6.5" width="14" height="8" rx="1" fill="#e6e6e4" stroke="#777"/><rect x="3" y="10" width="9" height="1" fill="#888"/></svg>
<svg class="ic" style="left:1123px;top:759px" width="16" height="16" viewBox="0 0 16 16"><ellipse cx="8" cy="6" rx="7.5" ry="5.5" fill="#9a9a98" stroke="#6a6a68"/><ellipse cx="8" cy="6" rx="5" ry="3.5" fill="#7d7d7b"/><path d="M3 10v2q5 4 10 0v-2" fill="#8d8d8b" stroke="#6a6a68" stroke-width=".8"/></svg>
<svg class="ic" style="left:1146px;top:759px" width="13" height="16" viewBox="0 0 13 16"><rect x="2.5" y="0.5" width="6" height="5" fill="#fff" stroke="#777"/><rect x="0.5" y="5.5" width="10" height="10" rx="1" fill="#4a7fc8" stroke="#2a5aa0"/><rect x="5" y="8" width="8" height="8" rx="1.5" fill="#c80c12"/><path d="M7 10l4 4M11 10l-4 4" stroke="#fff" stroke-width="1.4"/></svg>
<svg class="ic" style="left:1163px;top:759px" width="16" height="16" viewBox="0 0 16 16"><rect x="0.5" y="0.5" width="13" height="11" fill="#dcdcda" stroke="#777"/><rect x="2" y="2" width="10" height="8" fill="#2c4e9a"/><rect x="8" y="8" width="8" height="8" rx="1.5" fill="#c80c12"/><path d="M10 10l4 4M14 10l-4 4" stroke="#fff" stroke-width="1.4"/></svg>
<svg class="ic" style="left:1186px;top:759px" width="10" height="16" viewBox="0 0 10 16"><rect x="2.5" y="0.5" width="5" height="5" fill="#fff" stroke="#777"/><rect x="0.5" y="5.5" width="9" height="10" rx="1" fill="#4a7fc8" stroke="#2a5aa0"/><path d="M5 7v7M3 9l2 2 2-3" fill="none" stroke="#1a2a50" stroke-width="1"/></svg>
<svg class="ic" style="left:1203px;top:759px" width="16" height="16" viewBox="0 0 16 16"><ellipse cx="8" cy="6" rx="7.5" ry="5.5" fill="#9a9a98" stroke="#6a6a68"/><ellipse cx="8" cy="6" rx="5" ry="3.5" fill="#7d7d7b"/><path d="M3 10v2q5 4 10 0v-2" fill="#8d8d8b" stroke="#6a6a68" stroke-width=".8"/></svg>
<svg class="ic" style="left:1223px;top:759px" width="16" height="16" viewBox="0 0 16 16"><ellipse cx="8" cy="6" rx="7.5" ry="5.5" fill="#9a9a98" stroke="#6a6a68"/><ellipse cx="8" cy="6" rx="5" ry="3.5" fill="#7d7d7b"/><path d="M3 10v2q5 4 10 0v-2" fill="#8d8d8b" stroke="#6a6a68" stroke-width=".8"/></svg>
<svg class="ic" style="left:1245px;top:759px" width="16" height="16" viewBox="0 0 16 16"><rect x="2.5" y="3.5" width="12" height="12" fill="#f0d870" stroke="#8a7020"/><path d="M5 8h7M5 10.5h7M5 13h5" stroke="#c0a040" stroke-width=".8"/><circle cx="4" cy="4" r="3" fill="#d02030"/></svg>
<svg class="ic" style="left:1263px;top:760px" width="17" height="17" viewBox="0 0 17 17"><path d="M2 16L16 2M6 16L16 6M10 16L16 10" stroke="#a8a8a4" stroke-width="1.2"/></svg>

<!-- ========== Linux panel ========== -->
<div class="a" style="left:0;top:777px;width:1280px;height:23px;background:#EDEDEB;border-top:1px solid #fafaf9"></div>
<svg class="ic" style="left:4px;top:782px" width="6" height="13"><rect x="1" y="1" width="1" height="1" fill="#a8a8a4"/><rect x="1" y="4" width="1" height="1" fill="#a8a8a4"/><rect x="1" y="7" width="1" height="1" fill="#a8a8a4"/><rect x="1" y="10" width="1" height="1" fill="#a8a8a4"/><rect x="4" y="1" width="1" height="1" fill="#a8a8a4"/><rect x="4" y="4" width="1" height="1" fill="#a8a8a4"/><rect x="4" y="7" width="1" height="1" fill="#a8a8a4"/><rect x="4" y="10" width="1" height="1" fill="#a8a8a4"/></svg>
<svg class="ic" style="left:17px;top:782px" width="16" height="16" viewBox="0 0 16 16"><path d="M2 2l12 12M14 2L2 14" stroke="#6cc6f0" stroke-width="3.5"/><path d="M2 8q3-3 6-2l4-2q1 2 2 3l-2 1q0 3-3 3l-4-1z" fill="#000"/></svg>
<div class="pb" style="left:40px;width:23px;background:#f6f6f5;border-color:#bdbbb5"></div>
<svg class="ic" style="left:43px;top:781px" width="17" height="17" viewBox="0 0 17 17"><defs><pattern id="chk" width="2" height="2" patternUnits="userSpaceOnUse"><rect width="1" height="1" fill="#333"/><rect x="1" y="1" width="1" height="1" fill="#333"/></pattern></defs><rect x="1" y="1" width="14" height="14" rx="2" fill="url(#chk)" stroke="#3a5aa0" stroke-width=".6" stroke-dasharray="1 1"/><path d="M9 9l7 7H9z" fill="#000"/></svg>
<svg class="ic" style="left:65px;top:781px" width="17" height="17" viewBox="0 0 17 17"><rect x="0.5" y="0.5" width="16" height="16" rx="2" fill="#f2d8a0" stroke="#7a6418"/><rect x="3" y="3" width="11" height="4" fill="#e09020" stroke="#8a5a10" stroke-width=".6"/><rect x="3" y="9" width="11" height="4" fill="#e09020" stroke="#8a5a10" stroke-width=".6"/></svg>
<svg class="ic" style="left:87px;top:782px" width="17" height="16" viewBox="0 0 17 16"><rect x="0.5" y="0.5" width="16" height="15" fill="#4a6a9a"/><path d="M4 1h9l3 3v8l-3 3H4l-3-3V4z" fill="#b8b8a0" stroke="#6a7a8a" stroke-width=".6"/></svg>
<svg class="ic" style="left:108px;top:785px" width="5" height="11"><rect x="0" y="0" width="5" height="1" fill="#b0b0ac"/><rect x="0" y="2" width="5" height="1" fill="#b0b0ac"/><rect x="0" y="4" width="5" height="1" fill="#b0b0ac"/><rect x="0" y="6" width="5" height="1" fill="#b0b0ac"/><rect x="0" y="8" width="5" height="1" fill="#b0b0ac"/><rect x="0" y="10" width="5" height="1" fill="#b0b0ac"/></svg>
<div class="pb" style="left:114px;width:81.5px;"></div>
<div class="pb" style="left:196.5px;width:81.0px;"></div>
<div class="pb" style="left:279px;width:81.5px;"></div>
<div class="pb" style="left:361.5px;width:82.5px;"></div>
<div class="pb" style="left:445px;width:81.0px;"></div>
<div class="pb" style="left:527.5px;width:81.0px;"></div>
<div class="pb" style="left:611px;width:80.5px;"></div>
<div class="pb" style="left:693.5px;width:81.5px;"></div>
<div class="pb" style="left:776.5px;width:81.5px;"></div>
<div class="pb" style="left:859.5px;width:82.0px;background:linear-gradient(#dddbd7,#d6d4d0);border-color:#a9a7a2;"></div>
<svg class="ic" style="left:117.5px;top:781px" width="16" height="16" viewBox="0 0 16 16"><circle cx="7" cy="8" r="6" fill="#6e9fd6"/><path d="M12 8l4-5v10z" fill="#6e9fd6"/><circle cx="5.5" cy="7" r="1.6" fill="#fff"/><circle cx="5.5" cy="7" r=".8" fill="#234"/></svg>
<svg class="ic" style="left:200px;top:781px" width="16" height="16" viewBox="0 0 16 16"><rect x="0.5" y="0.5" width="15" height="15" fill="#f4f8f4" stroke="#c8d0c8"/><rect x="1" y="1" width="11" height="10" fill="#3aa63a"/><path d="M2 14q6-2 10-8" fill="none" stroke="#2a6ab0" stroke-width="1"/></svg>
<svg class="ic" style="left:282px;top:781px" width="16" height="16" viewBox="0 0 16 16"><circle cx="8" cy="9" r="6.5" fill="#8c8ce0"/><circle cx="7" cy="8" r="3.5" fill="#b4b4f0"/><path d="M10 2l3-1 2 3" fill="none" stroke="#c0c0e8" stroke-width="1"/></svg>
<svg class="ic" style="left:365px;top:781px" width="16" height="16" viewBox="0 0 16 16"><path d="M3 7h10v7q-5 3-10 0z" fill="#fff" stroke="#555" stroke-width="1"/><ellipse cx="8" cy="7" rx="5" ry="2" fill="#fff" stroke="#555"/><path d="M1 4q5-3 10-3" fill="none" stroke="#3a6ac0" stroke-width="1.3"/><rect x="11" y="0" width="2" height="2" fill="#e00"/></svg>
<svg class="ic" style="left:448px;top:781px" width="16" height="16" viewBox="0 0 16 16"><path d="M1 10q0-9 7-9t7 9v5H1z" fill="#8a5aa8"/><circle cx="6" cy="7" r="2.2" fill="#fff"/><circle cx="10.5" cy="7" r="2.2" fill="#fff"/><path d="M6 11h5l-2.5 2z" fill="#f0a020"/></svg>
<svg class="ic" style="left:530.5px;top:781px" width="16" height="16" viewBox="0 0 16 16"><circle cx="8" cy="8" r="7" fill="#2ca8ea"/><text x="4" y="13" font-family="Liberation Sans" font-size="12" font-weight="bold" fill="#fff">S</text></svg>
<svg class="ic" style="left:613.5px;top:781px" width="16" height="16" viewBox="0 0 16 16"><rect x="0.5" y="0.5" width="15" height="15" rx="2" fill="#1c2a1c" stroke="#7a7a78"/><path d="M3 5l3 2-3 2M7 11h5" stroke="#e0e0e0" stroke-width="1"/></svg>
<svg class="ic" style="left:697px;top:781px" width="16" height="16" viewBox="0 0 16 16"><path d="M0.5 3.5h5l1 1h8v10h-14z" fill="#5b8ed4" stroke="#3a6ab0"/><path d="M5 11l3-3 3 3v3H5z" fill="#d8e4f4"/></svg>
<svg class="ic" style="left:779px;top:781px" width="16" height="16" viewBox="0 0 16 16"><rect x="0.5" y="0.5" width="15" height="15" fill="#f8f8f8" stroke="#d4d4d4"/><path d="M9 2q-4 2 0 5" fill="none" stroke="#6ab0e8" stroke-width="1.2"/><path d="M1 10h6l2 1h6M3 10l1 3h3M10 11l1 2h3" fill="none" stroke="#999" stroke-width=".8"/></svg>
<svg class="ic" style="left:862px;top:781px" width="16" height="16" viewBox="0 0 16 16">
 <rect x="0.5" y="0.5" width="15" height="15" rx="1.8" fill="#f8d41e" stroke="#7a5c00" stroke-width="1"/>
 <path d="M0.5 8H2.8Q3.8 8 3.8 9V11.5Q3.8 12.5 4.8 12.5H7.5Q8.5 12.5 8.5 13.5V15.5H4Q0.5 15.5 0.5 12Z" fill="#4a86d0" stroke="#1c4a98" stroke-width="1"/>
 <path d="M1.5 9v3q0 2.5 2.5 2.5h3" fill="none" stroke="#a8c8f0" stroke-width=".8"/>
 <path d="M4 4.5l3 2M12 4.5l-3 2M4 12l3-2M12 12l-3-2" stroke="#7a5c00" stroke-width="1"/>
 <path d="M5.5 4.5h5l1.5 3.5-1.5 3.5h-5L4 8z" fill="#fff39a" stroke="#8a6a00" stroke-width=".8"/>
 <circle cx="8" cy="8" r="1.2" fill="#6a5000"/>
 <rect x="7.3" y="0" width="1.4" height="2" fill="#1c4a98"/><rect x="14" y="7.3" width="2" height="1.4" fill="#1c4a98"/>
 <rect x="7" y="3.2" width="2" height="1" fill="#a8d0f8"/><rect x="11.8" y="7" width="1" height="2" fill="#a8d0f8"/>
</svg>
<div class="a" style="left:944px;top:779px;width:30px;height:20px;background:#a9c9f1"></div>
<svg class="ic" style="left:951px;top:781px" width="16" height="16" viewBox="0 0 16 16">
 <rect x="0.5" y="0.5" width="15" height="15" rx="1.8" fill="#f8d41e" stroke="#7a5c00" stroke-width="1"/>
 <path d="M0.5 8H2.8Q3.8 8 3.8 9V11.5Q3.8 12.5 4.8 12.5H7.5Q8.5 12.5 8.5 13.5V15.5H4Q0.5 15.5 0.5 12Z" fill="#4a86d0" stroke="#1c4a98" stroke-width="1"/>
 <path d="M1.5 9v3q0 2.5 2.5 2.5h3" fill="none" stroke="#a8c8f0" stroke-width=".8"/>
 <path d="M4 4.5l3 2M12 4.5l-3 2M4 12l3-2M12 12l-3-2" stroke="#7a5c00" stroke-width="1"/>
 <path d="M5.5 4.5h5l1.5 3.5-1.5 3.5h-5L4 8z" fill="#fff39a" stroke="#8a6a00" stroke-width=".8"/>
 <circle cx="8" cy="8" r="1.2" fill="#6a5000"/>
 <rect x="7.3" y="0" width="1.4" height="2" fill="#1c4a98"/><rect x="14" y="7.3" width="2" height="1.4" fill="#1c4a98"/>
 <rect x="7" y="3.2" width="2" height="1" fill="#a8d0f8"/><rect x="11.8" y="7" width="1" height="2" fill="#a8d0f8"/>
</svg>
<div class="a" style="left:976px;top:779px;width:32px;height:20px;background:#adada6"></div>
<div class="a" style="left:1010px;top:778px;width:80px;height:22px;border:1px solid #b4b2ac;border-bottom:none;border-radius:2px 2px 0 0"></div>
<svg class="ic" style="left:1012px;top:781px" width="17" height="16" viewBox="0 0 17 16"><rect x="1" y="11" width="3" height="4" fill="#2a58a8"/><rect x="5" y="8" width="3" height="7" fill="#3a68b8"/><rect x="9" y="5" width="3" height="10" fill="#9ab0d0" stroke="#6a80a0" stroke-width=".5"/><rect x="13" y="2" width="3" height="13" fill="#c0c8d8" stroke="#6a80a0" stroke-width=".5"/></svg>
<svg class="ic" style="left:1031px;top:780px" width="18" height="18" viewBox="0 0 18 18"><rect x="0.5" y="0.5" width="11" height="8" rx="1.5" fill="#fff" stroke="#666"/><path d="M3 8.5v3l3-3" fill="#fff" stroke="#666" stroke-width=".8"/><circle cx="12" cy="12" r="5" fill="#e8e8e8" stroke="#666"/><path d="M10 10l4 4M14 10l-4 4" stroke="#555" stroke-width="1.2"/></svg>
<svg class="ic" style="left:1050px;top:780px" width="18" height="18" viewBox="0 0 18 18"><path d="M9 1.5q6-1 7.5 5t-3 9.5-9-1-3-9 7.5-4.5z" fill="#fff" stroke="#4ab030" stroke-width="1.5"/></svg>
<svg class="ic" style="left:1071px;top:780px" width="18" height="18" viewBox="0 0 18 18"><rect x="1.5" y="3.5" width="11" height="13" rx="1.5" fill="#b8cce4" stroke="#5a7090"/><rect x="4" y="1.5" width="6" height="3" fill="#ddd" stroke="#777" stroke-width=".8"/><path d="M9 16l2-6 5-6" stroke="#777" stroke-width="1.2" fill="none"/><rect x="8" y="11" width="8" height="6" fill="#fff" stroke="#555" stroke-width=".8"/></svg>
<svg class="ic" style="left:1095px;top:781px" width="16" height="16" viewBox="0 0 16 16"><ellipse cx="8" cy="8" rx="7" ry="7" fill="#e2e2e0"/><ellipse cx="8" cy="8" rx="4" ry="4" fill="#d4d4d2"/></svg>
<div class="a" style="left:1116px;top:781px;width:7px;height:19px;background:#4c6c8c;border-radius:2px 2px 0 0"></div>
<div class="a" style="left:1124px;top:788px;width:8px;height:12px;background:#4c6c8c;border-radius:2px 2px 0 0"></div>
<div class="a" style="left:1133px;top:780px;width:15px;height:20px;background:#fff;border:1px solid #b0b0ac;border-bottom:none"></div>
<svg class="ic" style="left:1134px;top:784px" width="13" height="16"><rect x="1" y="14" width="2" height="1" fill="#22c022"/><rect x="4" y="14" width="2" height="1" fill="#22c022"/><rect x="7" y="6" width="2" height="10" fill="#22d022"/><rect x="9" y="2" width="2" height="14" fill="#22d022"/><rect x="11" y="8" width="1" height="8" fill="#22d022"/></svg>
<div class="a" style="left:1187px;top:781px;width:16px;height:18px;background:linear-gradient(90deg,#e8e8e6,#f6f6f5,#e0e0de)"></div>
<div class="a" style="left:1207px;top:779px;width:60px;height:21px;border:1px solid #b8b6b0;border-bottom:none;border-radius:2px 2px 0 0"></div>
<svg class="ic" style="left:1270px;top:782px" width="6" height="13"><rect x="1" y="1" width="1" height="1" fill="#a8a8a4"/><rect x="1" y="4" width="1" height="1" fill="#a8a8a4"/><rect x="1" y="7" width="1" height="1" fill="#a8a8a4"/><rect x="1" y="10" width="1" height="1" fill="#a8a8a4"/><rect x="4" y="1" width="1" height="1" fill="#a8a8a4"/><rect x="4" y="4" width="1" height="1" fill="#a8a8a4"/><rect x="4" y="7" width="1" height="1" fill="#a8a8a4"/><rect x="4" y="10" width="1" height="1" fill="#a8a8a4"/></svg>

<div class="t" style="left:378.30px;top:7.02px;font-size:12.5px;font-weight:bold;color:#fff;transform:scaleX(1.1068);">Windows</div>
<div class="t" style="left:441.50px;top:7.02px;font-size:12.5px;font-weight:bold;color:#fff;transform:scaleX(1.1865);">XP</div>
<div class="t" style="left:464.80px;top:7.02px;font-size:12.5px;font-weight:bold;color:#fff;transform:scaleX(1.0989);">Professional</div>
<div class="t" style="left:548.80px;top:7.02px;font-size:12.5px;font-weight:bold;color:#fff;transform:scaleX(1.5101);">-</div>
<div class="t" style="left:560.90px;top:7.02px;font-size:12.5px;font-weight:bold;color:#fff;transform:scaleX(1.1344);">VMware</div>
<div class="t" style="left:618.80px;top:7.02px;font-size:12.5px;font-weight:bold;color:#fff;transform:scaleX(1.1377);">Player</div>
<div class="t" style="left:665.50px;top:7.02px;font-size:12.5px;font-weight:bold;color:#fff;transform:scaleX(1.1262);">(Non-commercial</div>
<div class="t" style="left:784.90px;top:7.02px;font-size:12.5px;font-weight:bold;color:#fff;transform:scaleX(1.2067);">use</div>
<div class="t" style="left:812.90px;top:7.02px;font-size:12.5px;font-weight:bold;color:#fff;transform:scaleX(1.1588);">only)</div>
<div class="t" style="left:8.25px;top:28.15px;font-size:14px;color:#2e3436;transform:scaleX(1.0076);"><u>F</u>ile</div>
<div class="t" style="left:42.50px;top:28.15px;font-size:14px;color:#2e3436;transform:scaleX(1.0519);"><u>V</u>irtual Machine</div>
<div class="t" style="left:155.75px;top:28.15px;font-size:14px;color:#2e3436;transform:scaleX(1.0499);"><u>H</u>elp</div>
<div class="t" style="left:23.75px;top:58.99px;font-size:13px;font-weight:bold;color:#fff;text-shadow:1px 1px 0 #0a246a;transform:scaleX(0.9197);">DG8SAQ</div>
<div class="t" style="left:82.75px;top:58.99px;font-size:13px;font-weight:bold;color:#fff;text-shadow:1px 1px 0 #0a246a;transform:scaleX(1.0360);">-</div>
<div class="t" style="left:94.50px;top:58.99px;font-size:13px;font-weight:bold;color:#fff;text-shadow:1px 1px 0 #0a246a;transform:scaleX(1.0024);">Vector Network Analyzer Software</div>
<div class="t" style="left:314.50px;top:58.99px;font-size:13px;font-weight:bold;color:#fff;text-shadow:1px 1px 0 #0a246a;transform:scaleX(0.9899);">-</div>
<div class="t" style="left:322.50px;top:58.99px;font-size:13px;font-weight:bold;color:#fff;text-shadow:1px 1px 0 #0a246a;transform:scaleX(1.0260);">A2796 licensed to A2796</div>
<div class="t" style="left:8.25px;top:81.94px;font-size:11px;color:#000;transform:scaleX(0.9304);">File</div>
<div class="t" style="left:36.25px;top:81.94px;font-size:11px;color:#000;transform:scaleX(0.9580);">Measure</div>
<div class="t" style="left:89.50px;top:81.94px;font-size:11px;color:#000;transform:scaleX(0.9811);">Settings</div>
<div class="t" style="left:140.75px;top:81.94px;font-size:11px;color:#000;transform:scaleX(0.9635);">Tools</div>
<div class="t" style="left:177.50px;top:81.94px;font-size:11px;color:#000;transform:scaleX(0.9823);">Options</div>
<div class="t" style="left:225.75px;top:81.94px;font-size:11px;color:#000;transform:scaleX(0.9613);">Help</div>
<div class="t" style="left:37.00px;top:121.94px;font-size:11px;color:#800080;transform:scaleX(1.0273);">Trace2</div>
<div class="t" style="left:2.50px;top:150.69px;font-size:11px;color:#004080;transform:scaleX(1.1043);">10dB/</div>
<div class="t" style="left:37.00px;top:158.69px;font-size:11px;color:#800080;transform:scaleX(0.9705);">0dB</div>
<div class="t" style="left:37.00px;top:210.69px;font-size:11px;color:#800080;transform:scaleX(0.9537);">-10dB</div>
<div class="t" style="left:37.00px;top:262.69px;font-size:11px;color:#800080;transform:scaleX(0.9537);">-20dB</div>
<div class="t" style="left:37.00px;top:313.69px;font-size:11px;color:#800080;transform:scaleX(0.9537);">-30dB</div>
<div class="t" style="left:37.00px;top:365.69px;font-size:11px;color:#800080;transform:scaleX(0.9537);">-40dB</div>
<div class="t" style="left:37.00px;top:417.69px;font-size:11px;color:#800080;transform:scaleX(0.9537);">-50dB</div>
<div class="t" style="left:37.00px;top:468.69px;font-size:11px;color:#800080;transform:scaleX(0.9537);">-60dB</div>
<div class="t" style="left:37.00px;top:520.69px;font-size:11px;color:#800080;transform:scaleX(0.9537);">-70dB</div>
<div class="t" style="left:37.00px;top:572.69px;font-size:11px;color:#800080;transform:scaleX(0.9537);">-80dB</div>
<div class="t" style="left:37.00px;top:623.69px;font-size:11px;color:#800080;transform:scaleX(0.9537);">-90dB</div>
<div class="t" style="left:1248.25px;top:165.69px;font-size:11px;color:#004080;transform:scaleX(1.0026);">&lt;Ref2</div>
<div class="t" style="left:1251.40px;top:178.19px;font-size:11px;color:#004080;transform:scaleX(0.9245);">0dB</div>
<div class="t" style="left:3.25px;top:621.29px;font-size:11px;color:#000;transform:scaleX(0.9352);">MC</div>
<div class="t" style="left:895.10px;top:196.09px;font-size:12px;font-weight:bold;color:#000;transform:scaleX(1.2880);">1I</div>
<div class="t" style="left:924.20px;top:196.09px;font-size:12px;font-weight:bold;color:#000;transform:scaleX(1.1948);">9.99942MHz</div>
<div class="t" style="left:895.10px;top:211.84px;font-size:12px;font-weight:bold;color:#000;transform:scaleX(1.1341);">2:&lt;=1:</div>
<div class="t" style="left:942.90px;top:211.84px;font-size:12px;font-weight:bold;color:#000;transform:scaleX(1.1905);">60.00dB</div>
<div class="t" style="left:895.10px;top:227.84px;font-size:12px;font-weight:bold;color:#000;transform:scaleX(1.3968);">3:-2:</div>
<div class="t" style="left:935.75px;top:227.84px;font-size:12px;font-weight:bold;color:#000;transform:scaleX(1.2023);">5.31 kHz</div>
<div class="t" style="left:895.10px;top:243.84px;font-size:12px;font-weight:bold;color:#000;transform:scaleX(1.1151);">4:</div>
<div class="t" style="left:923.25px;top:243.84px;font-size:12px;font-weight:bold;color:#000;transform:scaleX(1.1940);">9.99944MHz</div>
<div class="t" style="left:1038.90px;top:196.09px;font-size:12px;font-weight:bold;color:#004080;transform:scaleX(1.2189);">-2.63dB</div>
<div class="t" style="left:1034.80px;top:211.84px;font-size:12px;font-weight:bold;color:#004080;transform:scaleX(1.2252);">-62.63dB</div>
<div class="t" style="left:1034.80px;top:227.84px;font-size:12px;font-weight:bold;color:#004080;transform:scaleX(1.2252);">-62.63dB</div>
<div class="t" style="left:1038.90px;top:243.84px;font-size:12px;font-weight:bold;color:#004080;transform:scaleX(1.2189);">-2.64dB</div>
<div class="t" style="left:34.80px;top:639.89px;font-size:11px;color:#000;transform:scaleX(0.9697);">Start = 9.9918 MHz</div>
<div class="t" style="left:590.70px;top:639.69px;font-size:11px;color:#000;transform:scaleX(0.9754);">Center = 9.9993 MHz</div>
<div class="t" style="left:605.70px;top:652.69px;font-size:11px;color:#000;transform:scaleX(0.9977);">Span = 15 kHz</div>
<div class="t" style="left:1149.80px;top:639.69px;font-size:11px;color:#000;transform:scaleX(0.9822);">Stop = 10.0068 MHz</div>
<div class="t" style="left:3.25px;top:660.69px;font-size:11px;color:#000;transform:scaleX(0.8748);">=&gt;</div>
<div class="t" style="left:3.25px;top:673.79px;font-size:11px;color:#000;transform:scaleX(0.9792);">TX Att.&nbsp; = 0 dB</div>
<div class="t" style="left:10.40px;top:690.69px;font-size:11px;color:#000;transform:scaleX(1.0113);">S21</div>
<div class="t" style="left:77.50px;top:689.69px;font-size:11px;color:#000;transform:scaleX(0.9332);">=&gt;</div>
<div class="t" style="left:105.50px;top:690.69px;font-size:11px;color:#000;transform:scaleX(0.9849);">Plot2</div>
<div class="t" style="left:193.25px;top:663.49px;font-size:11px;color:#ff0000;transform:scaleX(1.0525);">S11</div>
<div class="t" style="left:221.40px;top:663.49px;font-size:11px;color:#ff0000;transform:scaleX(0.8835);">dB</div>
<div class="t" style="left:193.25px;top:686.94px;font-size:11px;color:#004080;transform:scaleX(1.1671);">S21</div>
<div class="t" style="left:221.40px;top:686.94px;font-size:11px;color:#004080;transform:scaleX(0.8835);">dB</div>
<div class="t" style="left:1211.80px;top:669.59px;font-size:11px;color:#000;transform:scaleX(0.9702);">Continuous</div>
<div class="t" style="left:1205.50px;top:689.69px;font-size:11px;color:#000;transform:scaleX(0.9869);">Single Sweep</div>
<div class="t" style="left:3.25px;top:711.94px;font-size:11px;color:#000;transform:scaleX(0.9654);">BandWidth</div>
<div class="t" style="left:180.75px;top:711.94px;font-size:11px;color:#000;transform:scaleX(0.8867);">aximum</div>
<div class="t" style="left:57.30px;top:711.94px;font-size:11px;color:#000;transform:scaleX(0.9465);">Haga clic aquí para iniciar</div>
<div class="t" style="left:37.00px;top:732.05px;font-size:16px;font-weight:bold;font-style:italic;color:#fff;text-shadow:1px 1px 1px #1a4a10;transform:scaleX(1.0555);">Inicio</div>
<div class="t" style="left:145.00px;top:735.69px;font-size:11px;color:#fff;transform:scaleX(0.9419);">VNWA</div>
<div class="t" style="left:1133.90px;top:734.44px;font-size:11px;color:#fff;transform:scaleX(0.8749);">ES</div>
<div class="t" style="left:1237.00px;top:734.44px;font-size:11px;color:#fff;transform:scaleX(1.0443);">23:23</div>
<div class="t" style="left:3.40px;top:759.59px;font-size:13px;color:#2e3436;transform:scaleX(1.1302);">To grab input, press Ctrl+G</div>
<div class="t" style="left:138.25px;top:782.99px;font-size:13px;color:#2e3436;transform:scaleX(1.2142);">[rtrx.h...</div>
<div class="t" style="left:221.25px;top:782.99px;font-size:13px;color:#2e3436;transform:scaleX(1.0942);">Bande...</div>
<div class="t" style="left:302.50px;top:782.99px;font-size:13px;color:#2e3436;transform:scaleX(1.0780);">[RETI...</div>
<div class="t" style="left:385.75px;top:782.99px;font-size:13px;color:#2e3436;transform:scaleX(1.0994);">Mezcl...</div>
<div class="t" style="left:468.90px;top:782.99px;font-size:13px;color:#2e3436;transform:scaleX(1.2070);">Lista ...</div>
<div class="t" style="left:551.40px;top:782.99px;font-size:13px;color:#2e3436;transform:scaleX(1.1391);">Skype...</div>
<div class="t" style="left:635.00px;top:782.99px;font-size:13px;color:#2e3436;transform:scaleX(1.2270);">Termi...</div>
<div class="t" style="left:717.50px;top:782.99px;font-size:13px;color:#2e3436;transform:scaleX(1.2231);">ramir...</div>
<div class="t" style="left:799.90px;top:782.99px;font-size:13px;color:#2e3436;transform:scaleX(1.1910);">[Trami...</div>
<div class="t" style="left:884.20px;top:782.99px;font-size:13px;color:#2e3436;transform:scaleX(1.1177);">Windo...</div>
<div class="t" style="left:1156.00px;top:782.99px;font-size:13px;color:#2e3436;transform:scaleX(0.9653);">RED</div>
<div class="t" style="left:1209.10px;top:782.99px;font-size:13px;color:#2e3436;transform:scaleX(1.1006);">23:23:00</div>
</body></html>
